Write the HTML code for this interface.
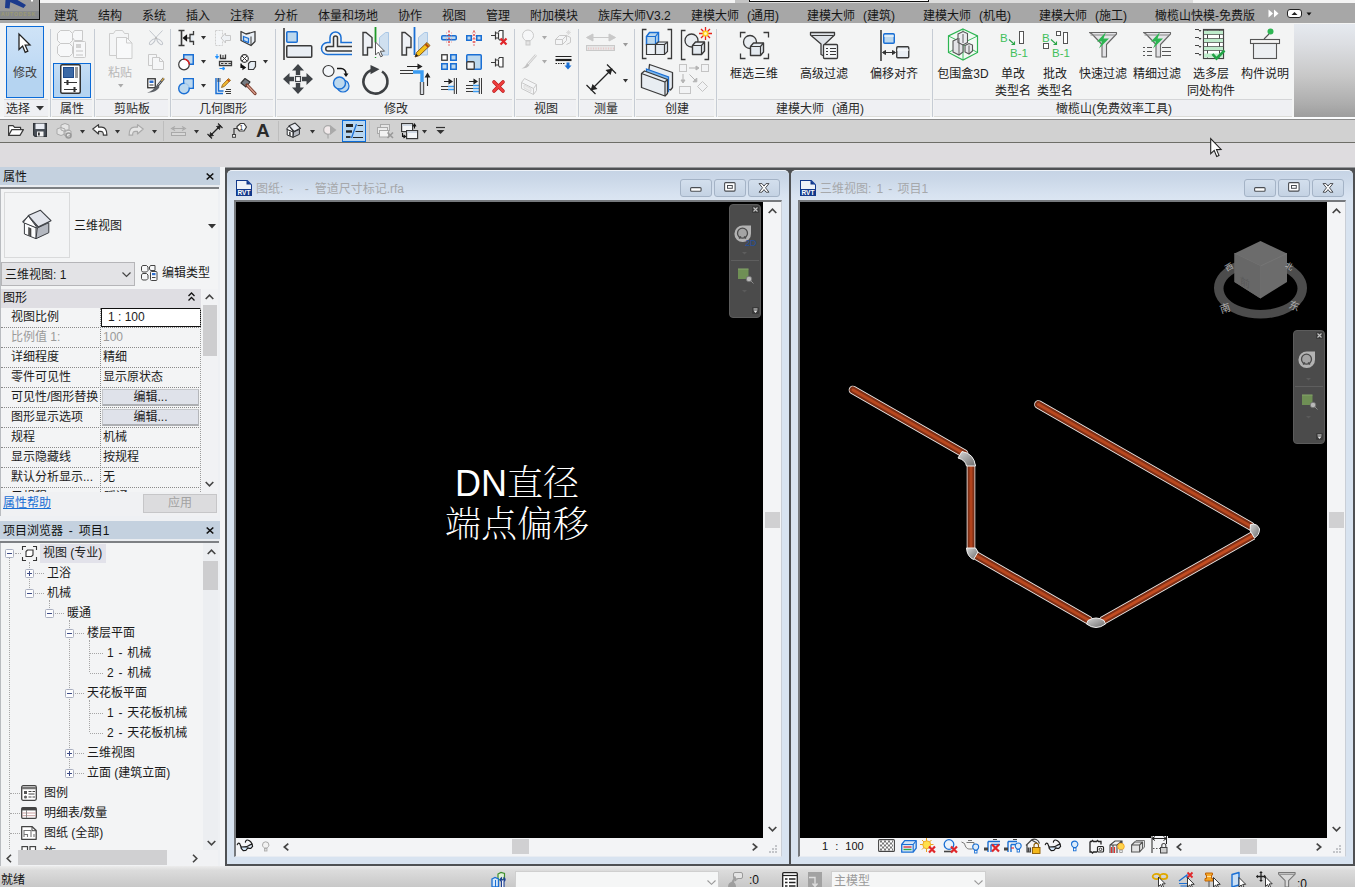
<!DOCTYPE html>
<html lang="zh-CN"><head><meta charset="utf-8"><title>Revit</title>
<style>
*{box-sizing:border-box;margin:0;padding:0}
html,body{width:1355px;height:887px;overflow:hidden;background:#dfe3ea}
body{font-family:"Liberation Sans","Noto Sans CJK SC",sans-serif;font-size:12px;color:#1a1a1a;position:relative}
.a{position:absolute}
.t{position:absolute;white-space:nowrap;line-height:16px;height:16px}
svg{position:absolute;overflow:visible}
</style></head><body>

<!-- top tab bar -->
<div class="a" style="left:0;top:0;width:1355px;height:3px;background:#f4f4f4"></div>
<div class="a" style="left:736px;top:0;width:457px;height:3px;background:#dcdcdc"></div>
<div class="a" style="left:735px;top:0;width:14px;height:3px;background:#c4c4c4"></div>
<div class="a" style="left:749px;top:-3px;width:180px;height:5px;background:#fff;border:1px solid #111"></div>
<div class="a" id="tabbar" style="left:0;top:3px;width:1355px;height:20px;background:#a7a7a7"></div>
<div class="a" style="left:0;top:0;width:40px;height:20px;background:linear-gradient(#9c9c9c 0,#9a9a9a 55%,#878a8c 60%,#85878a 100%);border-right:1px solid #0c0c0c;border-bottom:1px solid #0c0c0c"></div>
<svg style="left:0;top:0" width="40" height="20" viewBox="0 0 40 20"><path d="M5.500 0h5l-1 8.500-4.500-.5zM10 0h7.500l8.500 5-2.500 3-13.500-6z" fill="#1b3a8c"/><path d="M31 0l2 0 0 1.5-2 0z" fill="#fff"/></svg>
<span class="a" style="left:1px;top:11px;font:bold 5px/6px 'Liberation Sans',sans-serif;letter-spacing:.9px;color:#9c9a72;white-space:nowrap">AUTODESK</span>
<style>.tb{position:absolute;top:8px;height:16px;line-height:16px;white-space:nowrap;color:#161616}</style>
<span class="tb" style="left:54px">建筑</span>
<span class="tb" style="left:98px">结构</span>
<span class="tb" style="left:142px">系统</span>
<span class="tb" style="left:186px">插入</span>
<span class="tb" style="left:230px">注释</span>
<span class="tb" style="left:274px">分析</span>
<span class="tb" style="left:318px">体量和场地</span>
<span class="tb" style="left:398px">协作</span>
<span class="tb" style="left:442px">视图</span>
<span class="tb" style="left:486px">管理</span>
<span class="tb" style="left:530px">附加模块</span>
<span class="tb" style="left:598px">族库大师V3.2</span>
<span class="tb" style="left:691px">建模大师<span style="margin-left:8px">(通用)</span></span>
<span class="tb" style="left:807px">建模大师<span style="margin-left:8px">(建筑)</span></span>
<span class="tb" style="left:923px">建模大师<span style="margin-left:8px">(机电)</span></span>
<span class="tb" style="left:1039px">建模大师<span style="margin-left:8px">(施工)</span></span>
<span class="tb" style="left:1155px">橄榄山快模-免费版</span>
<svg style="left:1268px;top:9px" width="46" height="10" viewBox="0 0 46 10"><path d="M0.5 0.5L5 4.5 0.5 8.5zM6 0.5L10.5 4.5 6 8.5z" fill="#fff"/><rect x="19.5" y="0.5" width="14" height="8" rx="2.5" fill="#fff" stroke="#222" stroke-width="1"/><path d="M23.5 6L26.5 3 29.5 6z" fill="#222"/><path d="M38.5 3.5l5 0-2.5 3z" fill="#111"/></svg>

<!-- ribbon -->
<style>.pt{position:absolute;top:101px;height:16px;line-height:16px;white-space:nowrap;color:#2a2a2a}.sep{position:absolute;top:29px;width:1px;height:88px;background:#c6ccd4}.bl{position:absolute;white-space:nowrap;line-height:16px;height:16px;color:#222;text-align:center}.ptb{position:absolute;top:99px;height:18px;background:#eff0f3;border-top:1px solid #d4d5d7;border-bottom:1px solid #dcdcd8}</style>
<div class="a" style="left:0;top:23px;width:1355px;height:96px;background:#f3f4f4"></div>
<div class="a" style="left:1294px;top:24px;width:61px;height:94px;background:linear-gradient(#e6eaf0 0,#dcdee2 22%,#c8c8c8 55%,#adadad 85%,#9c9c9c 100%)"></div>
<div class="a" style="left:0;top:117px;width:1355px;height:2px;background:#fbfcfd"></div>
<div class="ptb" style="left:4px;width:44px"></div>
<div class="ptb" style="left:52px;width:40px"></div>
<div class="ptb" style="left:96px;width:72px"></div>
<div class="ptb" style="left:172px;width:101px"></div>
<div class="ptb" style="left:277px;width:235px"></div>
<div class="ptb" style="left:516px;width:60px"></div>
<div class="ptb" style="left:580px;width:52px"></div>
<div class="ptb" style="left:636px;width:78px"></div>
<div class="ptb" style="left:718px;width:212px"></div>
<div class="ptb" style="left:934px;width:358px"></div>
<div class="sep" style="left:50px"></div>
<div class="sep" style="left:94px"></div>
<div class="sep" style="left:170px"></div>
<div class="sep" style="left:275px"></div>
<div class="sep" style="left:514px"></div>
<div class="sep" style="left:578px"></div>
<div class="sep" style="left:634px"></div>
<div class="sep" style="left:716px"></div>
<div class="sep" style="left:932px"></div>
<span class="pt" style="left:6px">选择</span>
<span class="pt" style="left:60px">属性</span>
<span class="pt" style="left:114px">剪贴板</span>
<span class="pt" style="left:199px">几何图形</span>
<span class="pt" style="left:384px">修改</span>
<span class="pt" style="left:534px">视图</span>
<span class="pt" style="left:594px">测量</span>
<span class="pt" style="left:665px">创建</span>
<span class="pt" style="left:1056px">橄榄山(免费效率工具)</span>
<span class="pt" style="left:776px">建模大师<span style="margin-left:8px">(通用)</span></span>
<svg style="left:36px;top:106px" width="8" height="5" viewBox="0 0 8 5"><path d="M0 0h8l-4 4.5z" fill="#333"/></svg>
<div class="a" style="left:6px;top:26px;width:38px;height:72px;background:linear-gradient(#cfe3f7,#c3dcf5 45%,#b5d4f1 75%);border:1px solid #0b6bd8"></div>
<svg style="left:18px;top:33px" width="14" height="21" viewBox="0 0 14 21"><path d="M1 1v15.5l3.6-3.4 2.6 6.2 2.6-1.1-2.6-6 4.8-.2z" fill="#fff" stroke="#222" stroke-width="1.3" stroke-linejoin="miter"/></svg>
<span class="bl" style="left:13px;top:65px;color:#404040">修改</span>
<div class="a" style="left:53px;top:63px;width:38px;height:35px;background:linear-gradient(#c6def5,#b5d4f1 70%);border:1px solid #0b6bd8"></div>
<svg style="left:60px;top:64px" width="22" height="31" viewBox="0 0 22 31"><rect x="0.75" y="0.75" width="19.5" height="28.5" rx="1.5" fill="#fff" stroke="#333" stroke-width="1.5"/><rect x="3.5" y="3.5" width="10" height="10" fill="#3c69a5" stroke="#1f4a8a"/><rect x="15" y="3" width="3" height="11" fill="#9a9a9a"/><path d="M4 18.5h13M4 25.500h13" stroke="#333" stroke-width="1.2"/><path d="M7.500 16v5M14.500 23v5" stroke="#333" stroke-width="2"/></svg>
<svg style="left:57px;top:29px" width="30" height="30" viewBox="0 0 30 30"><g fill="#f7f8f9" stroke="#c9c9c9" stroke-width="1"><path d="M3.500 1.500h9l3 3v7l-3 3h-9l-3-3v-7z"/><path d="M3.500 14.500h9l3 3v7l-3 3h-9l-3-3v-7z"/><path d="M17.500 1.500h8v10h-8l-2-3v-4z"/><rect x="16.500" y="12.500" width="12" height="16" rx="1"/></g><rect x="19" y="15" width="5" height="4" fill="#d2d2d2"/><path d="M19 22h7M19 26h7" stroke="#c4c4c4"/></svg>
<svg style="left:108px;top:29px" width="26" height="31" viewBox="0 0 26 31"><g fill="#f4f5f6" stroke="#cdcdcd" stroke-width="1"><path d="M1.500 4.500h4l2-3h7l2 3h4v22h-19z"/><path d="M8.500 8.500h10l5.500 5.500v15.500h-15.500z" fill="#f8f9fa"/><path d="M18.500 8.500v5.500h5.500" fill="none"/></g></svg>
<span class="bl" style="left:108px;top:65px;color:#b9b9b9">粘贴</span>
<svg style="left:118px;top:84px" width="6" height="4" viewBox="0 0 6 4"><path d="M0 0h5.500l-2.750 3.500z" fill="#aaa"/></svg>
<svg style="left:148px;top:30px" width="16" height="16" viewBox="0 0 16 16"><g fill="#f4f5f6" stroke="#c2c6cc" stroke-width="1"><path d="M1.500 0.500l7.500 8M14.500 0.500l-7.500 8"/><ellipse cx="11.800" cy="11.800" rx="3.600" ry="1.500" transform="rotate(45 11.800 11.800)"/><ellipse cx="4.200" cy="11.800" rx="3.600" ry="1.500" transform="rotate(-45 4.200 11.800)"/></g><circle cx="8" cy="8.300" r="1.200" fill="#b9b9b9"/></svg>
<svg style="left:148px;top:54px" width="17" height="16" viewBox="0 0 17 16"><g fill="#f5f6f7" stroke="#c9c9c9"><path d="M0.500 0.500h8v11h-8z"/><path d="M4.500 3.500h7l4 4v8h-11z"/><path d="M11.500 3.500v4h4" fill="none"/></g></svg>
<svg style="left:147px;top:77px" width="18" height="18" viewBox="0 0 18 18"><rect x="0.75" y="1.750" width="7.500" height="9" fill="#fff" stroke="#333" stroke-width="1.3"/><rect x="2.500" y="3.500" width="4" height="2.500" fill="#2d6fd0"/><path d="M2.500 8h4" stroke="#333"/><path d="M16.800 1.200l-6.300 7.800" stroke="#3f4246" stroke-width="2.400"/><path d="M16.800 1.200l-2.400 3" stroke="#e0b050" stroke-width="1.200"/><path d="M14 4.600l-3 3.700" stroke="#d8dce2" stroke-width=".8"/><path d="M10.200 7.800l2.300 2c-1.200 3.200-5.500 6-12.500 6 4.500-1.500 7.500-4 10.200-8z" fill="#5c6066"/></svg>
<svg style="left:178px;top:30px" width="16" height="16" viewBox="0 0 16 16"><path d="M0.500 0.500h6M0.500 15.500h6M3.500 0.500v15" stroke="#3a3a3a" stroke-width="1.600" fill="none"/><path d="M15.500 1v3.500h-3.500v7h3.500v3.500" stroke="#3a3a3a" stroke-width="1.300" fill="#e8eff5"/><path d="M12 8h-6M8.500 5.500l-3 2.500 3 2.500z" stroke="#111" stroke-width="1.200" fill="#111"/></svg>
<svg style="left:201px;top:36px" width="5" height="4" viewBox="0 0 5 4"><path d="M0 0h5l-2.500 3.500z" fill="#333"/></svg>
<svg style="left:215px;top:30px" width="16" height="16" viewBox="0 0 16 16"><path d="M0.500 0.500h7v5h2l0 0v0M0.500 0.500v15h7v-5" fill="#f4f6f8" stroke="#cfcfcf" stroke-dasharray="2 1"/><path d="M15.500 5.500h-5v-2.500l-4.500 5 4.500 5v-2.500h5z" fill="#eef1f4" stroke="#c8c8c8"/></svg>
<svg style="left:240px;top:30px" width="16" height="16" viewBox="0 0 16 16"><path d="M1 1.500l5 2.500 4-1 5-1.500v10l-4 4-10-5z" fill="#e9eff5" stroke="#3a3a3a" stroke-width="1.300" stroke-linejoin="round"/><path d="M11 6.500v8.500" stroke="#3a3a3a"/><path d="M3.500 6.500l5 2v4l-5-2z" fill="#cfe2f3" stroke="#1a6fd4" stroke-width="1.300"/></svg>
<svg style="left:178px;top:54px" width="16" height="17" viewBox="0 0 16 17"><rect x="5.750" y="0.750" width="9.500" height="9.500" fill="#bcd8ee" stroke="#1a6fd4" stroke-width="1.500"/><circle cx="6" cy="10.500" r="5.300" fill="#fff" stroke="#3a3a3a" stroke-width="1.200"/><path d="M6 5.200a5.300 5.300 0 0 1 5.300 5.300" fill="none" stroke="#e02020" stroke-width="1.500"/></svg>
<svg style="left:201px;top:60px" width="5" height="4" viewBox="0 0 5 4"><path d="M0 0h5l-2.500 3.500z" fill="#333"/></svg>
<svg style="left:215px;top:54px" width="17" height="17" viewBox="0 0 17 17"><path d="M2 0v4M0.500 2.500l1.500 2 1.500-2z" stroke="#1e90ff" fill="#1e90ff"/><path d="M5.500 0.500v4h5v-4" fill="none" stroke="#3a3a3a" stroke-width="1.300"/><path d="M8 1v3" stroke="#3a3a3a"/><path d="M4.500 7.500h12v4h-12z" fill="#fff" stroke="#3a3a3a" stroke-width="1.300"/><path d="M6 9.500h10" stroke="#3a3a3a" stroke-dasharray="2.500 1.200"/><path d="M4.500 14.500h5M8 13l2 1.500-2 1.500z" stroke="#1e90ff" fill="#1e90ff"/></svg>
<svg style="left:240px;top:54px" width="16" height="17" viewBox="0 0 16 17"><circle cx="4.500" cy="4.500" r="3.800" fill="#fff" stroke="#3a3a3a" stroke-width="1.200"/><path d="M2 2l5 5M7 2l-5 5" stroke="#3a3a3a"/><path d="M8.500 9.500l2-2h5v5l-2 3h-5z" fill="#e6edf3" stroke="#3a3a3a" stroke-width="1.200"/><path d="M1 9.500v4h3.500M3 12l2.200 1.500-2.200 1.500z" stroke="#111" stroke-width="1.200" fill="#111"/></svg>
<svg style="left:263px;top:60px" width="5" height="4" viewBox="0 0 5 4"><path d="M0 0h5l-2.500 3.500z" fill="#333"/></svg>
<svg style="left:178px;top:78px" width="16" height="17" viewBox="0 0 16 17"><rect x="5.750" y="0.750" width="9.500" height="9.500" fill="#bcd8ee" stroke="#1a6fd4" stroke-width="1.500"/><circle cx="6" cy="10.500" r="5.300" fill="#bcd8ee" stroke="#1a6fd4" stroke-width="1.400"/><rect x="6.500" y="1.500" width="8" height="8" fill="#bcd8ee" opacity=".85"/></svg>
<svg style="left:201px;top:84px" width="5" height="4" viewBox="0 0 5 4"><path d="M0 0h5l-2.500 3.500z" fill="#333"/></svg>
<svg style="left:215px;top:78px" width="17" height="17" viewBox="0 0 17 17"><path d="M1 0v15.500h7M3.500 0v13h5" fill="none" stroke="#1a6fd4" stroke-width="1.500"/><path d="M3 0v4M5 0v4" stroke="#3a3a3a" stroke-width=".8"/><path d="M11 11.500h5M11 15.500h5M10 13.500h6" stroke="#3a3a3a" stroke-width="1"/><path d="M6.500 9.500l1-2.800 6-6.200 2 1.800-6.200 6.200z" fill="#f2b830" stroke="#8a5a12" stroke-width=".8"/><path d="M12.500 1.500l2 2" stroke="#c24a10" stroke-width="1.600"/></svg>
<svg style="left:240px;top:78px" width="17" height="17" viewBox="0 0 17 17"><path d="M1 5l4-4.500 5 3.500-4 5z" fill="#757b82" stroke="#333" stroke-width="1.200" stroke-linejoin="round"/><path d="M7 7l8 8.500" stroke="#7a3b2a" stroke-width="3.200" stroke-linecap="round"/><path d="M7.500 7.500l7.500 8" stroke="#d9a090" stroke-width="1.200" stroke-linecap="round"/></svg>
<svg style="left:283px;top:28px" width="30" height="32" viewBox="0 0 30 32"><path d="M1 0v32" stroke="#222" stroke-width="1.400"/><rect x="3.750" y="3.750" width="10.500" height="10.500" rx="1" fill="#bcd8ee" stroke="#1a6fd4" stroke-width="1.500"/><rect x="3.750" y="17.750" width="25" height="11.500" rx="1" fill="#e9eef4" stroke="#3a3a3a" stroke-width="1.500"/></svg>
<svg style="left:322px;top:31px" width="30" height="26" viewBox="0 0 30 26"><path d="M30 11.500h-11v-5a5.500 5.500 0 0 0-11 0v5h-2.500a5 5 0 0 0 0 12h24.500" fill="none" stroke="#1a6fd4" stroke-width="1.500"/><path d="M30 15.500h-14.500v-8.500a2 2 0 0 0-4 0v8.500h-5.500a2.200 2.200 0 0 0 0 4.500h24" fill="none" stroke="#3a3a3a" stroke-width="1.500"/></svg>
<svg style="left:362px;top:27px" width="28" height="32" viewBox="0 0 28 32"><path d="M1 5.500h3l6 5v10h-4.500v7.500h-4.500z" fill="#eef1f5" stroke="#3a3a3a" stroke-width="1.400"/><path d="M26.500 5.500h-3l-6 5v17.500h9z" fill="#cfe0f0" stroke="#a9c7e6" stroke-width="1"/><path d="M13.500 0v15" stroke="#1f9a28" stroke-width="1.800"/><path d="M13.500 15v16" stroke="#1f9a28" stroke-width="1.400" stroke-dasharray="1 14"/><path d="M13.500 15v13l3-3 2.200 4.800 1.800-.8-2.200-4.800h4.200z" fill="#fff" stroke="#555" stroke-width="1"/></svg>
<svg style="left:401px;top:27px" width="30" height="32" viewBox="0 0 30 32"><path d="M1 5.500h3l6 5v10h-4.500v7.500h-4.500z" fill="#eef1f5" stroke="#3a3a3a" stroke-width="1.400"/><path d="M26.500 5.500h-3l-6 5v17.500h9z" fill="#cfe0f0" stroke="#a9c7e6" stroke-width="1"/><path d="M13.500 0v28" stroke="#1a6fd4" stroke-width="1.800"/><path d="M14 30l1.500-4.500 10.500-10 3 3-10.500 10z" fill="#f5c21a" stroke="#7a4b10" stroke-width=".9"/><path d="M24.500 17l3 3" stroke="#b04a10" stroke-width="2.200"/><path d="M14 30l1.200-3.200 2 2z" fill="#222"/></svg>
<svg style="left:283px;top:64px" width="30" height="30" viewBox="0 0 30 30"><path d="M15 0l6 6.500h-3.800v4.500h-4.400v-4.500h-3.800zM15 30l6-6.500h-3.800v-4.500h-4.400v4.500h-3.800zM0 15l6.500-6v3.800h4.500v4.400h-4.500v3.800zM30 15l-6.500-6v3.800h-4.500v4.400h4.500v3.800z" fill="#3f4347"/><rect x="12.500" y="12.500" width="5" height="5" fill="#fff" stroke="#3f4347" stroke-width="1.200"/></svg>
<svg style="left:322px;top:64px" width="29" height="30" viewBox="0 0 29 30"><circle cx="6.500" cy="7" r="5.500" fill="#f4f7fa" stroke="#3a3a3a" stroke-width="1.200"/><path d="M15 4.500h4a5 5 0 0 1 5 5v1" fill="none" stroke="#111" stroke-width="1.400"/><path d="M21.500 9.500l2.500 3.500 2.500-3.500z" fill="#111"/><circle cx="21" cy="22" r="6" fill="#bcd8ee" stroke="#1a6fd4" stroke-width="1.200"/><circle cx="17.500" cy="19" r="6" fill="#bcd8ee" stroke="#1a6fd4" stroke-width="1.400"/></svg>
<svg style="left:362px;top:64px" width="28" height="30" viewBox="0 0 28 30"><path d="M20 7.500a12 12 0 1 1-9-1.700" fill="none" stroke="#3d4043" stroke-width="2.600"/><path d="M8.500 1l9 4.200-9 5z" fill="#3d4043"/></svg>
<svg style="left:400px;top:64px" width="31" height="31" viewBox="0 0 31 31"><path d="M7 2.500h13M18 0.500l3.500 2-3.500 2z" stroke="#222" fill="#222" stroke-width="1.100"/><path d="M0 6.500h13M0 9.500h13" stroke="#3a3a3a" stroke-width="1.100"/><path d="M13 8h9v10" fill="none" stroke="#3b9cf2" stroke-width="3.400"/><path d="M22 18v12" stroke="#d9dde2" stroke-width="3.400"/><path d="M20.300 18v12.500h3.400v-12.500" fill="none" stroke="#3a3a3a" stroke-width="1"/><path d="M27.500 22v-11M25.500 13l2-3.500 2 3.500z" stroke="#222" fill="#222" stroke-width="1.100"/></svg>
<svg style="left:441px;top:30px" width="16" height="16" viewBox="0 0 16 16"><rect x="0.750" y="5.750" width="14.500" height="4" rx="1" fill="#bcd8ee" stroke="#1a6fd4" stroke-width="1.500"/><path d="M8 0.500v15" stroke="#e03030" stroke-width="1.300" stroke-dasharray="2 1.500"/><path d="M5.500 2.500v11M10.500 2.500v11" stroke="#f08080" stroke-width=".8" stroke-dasharray="1 2"/></svg>
<svg style="left:466px;top:30px" width="16" height="16" viewBox="0 0 16 16"><rect x="0.750" y="5.750" width="4.500" height="4.500" fill="#bcd8ee" stroke="#1a6fd4" stroke-width="1.500"/><rect x="10.750" y="5.750" width="4.500" height="4.500" fill="#bcd8ee" stroke="#1a6fd4" stroke-width="1.500"/><path d="M8 0.500v15" stroke="#e03030" stroke-width="1.300" stroke-dasharray="2 1.500"/><path d="M6.500 2.500v11M9.500 2.500v11" stroke="#f08080" stroke-width=".8" stroke-dasharray="1 2"/></svg>
<svg style="left:491px;top:30px" width="17" height="16" viewBox="0 0 17 16"><path d="M0 5.500h4M4.500 1.500v8M4.500 3h3v5h-3M7.500 2l1-1.500h3.500v9.500h-3.500l-1-1.500" fill="#fff" stroke="#3a3a3a" stroke-width="1.200"/><path d="M9.500 8.500l6 6M15.500 8.500l-6 6" stroke="#e0262a" stroke-width="2.200"/></svg>
<svg style="left:441px;top:54px" width="16" height="16" viewBox="0 0 16 16"><rect x="0.750" y="0.750" width="5.500" height="5.500" fill="#fff" stroke="#3a3a3a" stroke-width="1.300"/><rect x="9.750" y="0.750" width="5.500" height="5.500" fill="#bcd8ee" stroke="#1a6fd4" stroke-width="1.500"/><rect x="0.750" y="9.750" width="5.500" height="5.500" fill="#bcd8ee" stroke="#1a6fd4" stroke-width="1.500"/><rect x="9.750" y="9.750" width="5.500" height="5.500" fill="#bcd8ee" stroke="#1a6fd4" stroke-width="1.500"/></svg>
<svg style="left:466px;top:54px" width="16" height="16" viewBox="0 0 16 16"><rect x="0.750" y="0.750" width="14.500" height="14.500" rx="1" fill="#bcd8ee" stroke="#1a6fd4" stroke-width="1.500"/><rect x="0.750" y="7.750" width="7.500" height="7.500" rx="1" fill="#f2f4f6" stroke="#3a3a3a" stroke-width="1.300"/></svg>
<svg style="left:491px;top:54px" width="17" height="16" viewBox="0 0 17 16"><path d="M0 8.500h4M4.500 4.500v8M4.500 6h3v5h-3M7.500 5l1-1.500h3.500v9.500h-3.500l-1-1.500" fill="#fff" stroke="#3a3a3a" stroke-width="1.200"/></svg>
<svg style="left:441px;top:78px" width="16" height="17" viewBox="0 0 16 17"><path d="M3 3.500h7M8 1.500l3 2-3 2z" stroke="#222" fill="#222" stroke-width="1.100"/><path d="M0 8.500h7M0 11.500h7" stroke="#3a3a3a" stroke-width="1"/><path d="M7 8.500h6M7 11.500h6" stroke="#3b9cf2" stroke-width="1.400"/><path d="M13.300 0v16M15.500 0v16" stroke="#3a3a3a" stroke-width="1"/></svg>
<svg style="left:466px;top:78px" width="16" height="17" viewBox="0 0 16 17"><path d="M3 3.500h7M8 1.500l3 2-3 2z" stroke="#222" fill="#222" stroke-width="1.100"/><path d="M0 7.500h7M0 10.500h7M0 13.500h7" stroke="#3a3a3a" stroke-width="1"/><path d="M7 7.500h6M7 10.500h6M7 13.500h6" stroke="#3b9cf2" stroke-width="1.400"/><path d="M13.300 0v16M15.500 0v16" stroke="#3a3a3a" stroke-width="1"/></svg>
<svg style="left:492px;top:80px" width="13" height="13" viewBox="0 0 13 13"><path d="M2 2l9 9M11 2l-9 9" stroke="#b81c1c" stroke-width="3.600" stroke-linecap="round"/><path d="M2 2l9 9M11 2l-9 9" stroke="#ef3e3e" stroke-width="2.400" stroke-linecap="round"/></svg>
<svg style="left:522px;top:30px" width="14" height="16" viewBox="0 0 14 16"><path d="M3.500 10.500c-2-1.500-3-3-3-5a5.500 5.500 0 0 1 11 0c0 2-1 3.500-3 5z" fill="#f6f7f8" stroke="#c9c9c9"/><rect x="4" y="11" width="4" height="4" fill="#e4e4e4" stroke="#c9c9c9"/></svg>
<svg style="left:542px;top:36px" width="5" height="4" viewBox="0 0 5 4"><path d="M0 0h5l-2.500 3.500z" fill="#aaa"/></svg>
<svg style="left:555px;top:30px" width="17" height="16" viewBox="0 0 17 16"><path d="M0.500 9.500l4-4h7l-4 4zM0.500 9.500v5h7v-5M7.500 14.500l4-4v-5" fill="#f4f5f6" stroke="#c9c9c9"/><path d="M11.500 5.500l4 2v5l-4 2" fill="none" stroke="#c9c9c9"/><path d="M13.500 0v5M11 2.500h5M11.800 .8l3.500 3.500M15.300 .8l-3.500 3.500" stroke="#d8d8d8" stroke-width=".8"/></svg>
<svg style="left:521px;top:54px" width="16" height="16" viewBox="0 0 16 16"><path d="M15 1l-8 9" stroke="#c9c9c9" stroke-width="2.600"/><path d="M15 1l-8 9" stroke="#f0f0f0" stroke-width="1"/><path d="M6 9l2.500 2c-1.500 2.500-4 3.500-8 3.500 3-1.200 4.500-3 5.500-5.500z" fill="#c0c0c0"/></svg>
<svg style="left:542px;top:60px" width="5" height="4" viewBox="0 0 5 4"><path d="M0 0h5l-2.500 3.500z" fill="#aaa"/></svg>
<svg style="left:555px;top:55px" width="17" height="15" viewBox="0 0 17 15"><path d="M0.500 1.500h16" stroke="#222" stroke-width="1"/><path d="M0.500 5h16" stroke="#222" stroke-width="2.200"/><path d="M0.500 8.500h10" stroke="#222" stroke-width="1" stroke-dasharray="1.500 1"/><path d="M11.500 7.500h3v3h2l-3.500 4-3.500-4h2z" fill="#1a6fd4"/></svg>
<svg style="left:521px;top:78px" width="17" height="17" viewBox="0 0 17 17"><path d="M0.500 4.500l3-4 12 6v6l-3 4-12-6z" fill="#f4f5f6" stroke="#c9c9c9"/><path d="M0.500 4.500l12 6 3-4M12.500 10.500v6" fill="none" stroke="#c9c9c9"/><path d="M3 7l7 3.500v3l-7-3.500z" fill="#ececec" stroke="#ddd"/></svg>
<svg style="left:586px;top:34px" width="30" height="18" viewBox="0 0 30 18"><path d="M3 3.500h24M7 0l-6.500 3.500 6.500 3.500zM23 0l6.500 3.500-6.500 3.500z" stroke="#c9c9c9" fill="#c9c9c9" stroke-width="1"/><rect x="0.500" y="11.500" width="28" height="5" fill="#e6e6e6" stroke="#c9c9c9"/><path d="M2 14.500h26" stroke="#e8c8c8" stroke-width="2" stroke-dasharray="1 1.500"/></svg>
<svg style="left:623px;top:43px" width="5" height="4" viewBox="0 0 5 4"><path d="M0 0h5l-2.500 3.500z" fill="#999"/></svg>
<svg style="left:586px;top:64px" width="30" height="30" viewBox="0 0 30 30"><path d="M21 0.500l9 9M0.500 21l9 9" stroke="#222" stroke-width="1.200"/><path d="M6 25l19-19" stroke="#222" stroke-width="1.300"/><path d="M26.500 4.500l-2 6.500-5-5zM4.500 26.500l2-6.500 5 5z" fill="#222"/></svg>
<svg style="left:623px;top:79px" width="5" height="4" viewBox="0 0 5 4"><path d="M0 0h5l-2.500 3.500z" fill="#333"/></svg>
<svg style="left:641px;top:29px" width="32" height="31" viewBox="0 0 32 31"><path d="M5.500 0.500h-4v29h4M26.500 0.500h4v29h-4" fill="none" stroke="#3a3a3a" stroke-width="1.300"/><path d="M5.500 7.500l3-4h9v9l-3 3h-9z" fill="#bcd8ee" stroke="#1a6fd4" stroke-width="1.500"/><path d="M5.500 7.500h9v8M14.500 7.500l3-4" fill="none" stroke="#1a6fd4" stroke-width="1.200"/><path d="M5.500 15.500h9v10h-9z" fill="#eef2f6" stroke="#3a3a3a" stroke-width="1.200"/><path d="M14.500 15.500l3-2.500h9v9.500l-3 3h-9z" fill="#e4eaf0" stroke="#3a3a3a" stroke-width="1.200"/><path d="M14.500 15.500h9v10M23.500 15.500l3-2.500" fill="none" stroke="#3a3a3a" stroke-width="1.200"/></svg>
<svg style="left:680px;top:27px" width="32" height="33" viewBox="0 0 32 33"><path d="M5.500 3.500h-4v29h4M24.500 32.500h4v-18" fill="none" stroke="#3a3a3a" stroke-width="1.300"/><circle cx="11.500" cy="13.500" r="6.500" fill="#e9edf1" stroke="#3a3a3a" stroke-width="1.300"/><path d="M12.500 18.500l3-3.500h9v9l-3 3.500h-9z" fill="#e4eaf0" stroke="#3a3a3a" stroke-width="1.400" stroke-linejoin="round"/><path d="M12.500 18.500h9v9M21.500 18.500l3-3.500" fill="none" stroke="#3a3a3a" stroke-width="1.200"/><path d="M25.500 0v13M19 6.500h13M21 2l9 9M30 2l-9 9" stroke="#e8261c" stroke-width="1.300"/><circle cx="25.500" cy="6.500" r="3" fill="#ffd21e"/><circle cx="25.500" cy="6.500" r="1.500" fill="#fff6c0"/></svg>
<svg style="left:641px;top:64px" width="33" height="33" viewBox="0 0 33 33"><path d="M8.500 0.500l23 8v15l-2 2.500-23-8z" fill="#e8edf2" stroke="#3a3a3a" stroke-width="1.300" stroke-linejoin="round"/><path d="M5.500 5l22 8v14.500l-22-8z" fill="#7db8ee" stroke="#1a6fd4" stroke-width="1.300"/><path d="M0.500 9.500l3-2.500 23 8.500v14l-2.500 2.500-23.500-8.500z" fill="#e8edf2" stroke="#3a3a3a" stroke-width="1.300" stroke-linejoin="round"/><path d="M0.500 9.500l23.500 8.500 2.500-2.500M24 18v14" fill="none" stroke="#3a3a3a" stroke-width="1.200"/></svg>
<svg style="left:679px;top:64px" width="30" height="30" viewBox="0 0 30 30"><g fill="#f2f3f4" stroke="#c4c4c4"><rect x="0.500" y="0.500" width="7" height="7"/><rect x="22.500" y="0.500" width="7" height="7"/><rect x="0.500" y="22.500" width="11" height="7"/><path d="M23.500 17.500l5 5-5 5-5-5z"/></g><g stroke="#b4b4b4" fill="#b4b4b4"><path d="M10 4h9M17 2l3 2-3 2zM4 10v8M2 16l2 3 2-3zM10.500 10.500l6 6M17.800 14l0 3.800-3.800 0z"/></g></svg>
<svg style="left:740px;top:32px" width="29" height="27" viewBox="0 0 29 27"><path d="M0.500 5.500v-5h5M23.500 0.500h5v5M28.500 21.500v5h-5M5.500 26.500h-5v-5" fill="none" stroke="#3a3a3a" stroke-width="1.300"/><circle cx="10" cy="10" r="6.500" fill="#e9edf1" stroke="#3a3a3a" stroke-width="1.300"/><path d="M10.500 14.500l3-3.500h10v9l-3 3.500h-10z" fill="#e4eaf0" stroke="#3a3a3a" stroke-width="1.400" stroke-linejoin="round"/><path d="M10.500 14.500h10v9M20.500 14.500l3-3.500" fill="none" stroke="#3a3a3a" stroke-width="1.200"/></svg>
<span class="bl" style="left:694px;width:120px;top:66px;color:#222">框选三维</span>
<svg style="left:810px;top:32px" width="29" height="27" viewBox="0 0 29 27"><path d="M0.500 0.500h24v2.500l-9.500 9v12.500l-4 -2v-10.500l-10.500-9z" fill="#dfe3e8" stroke="#3a3a3a" stroke-width="1.300" stroke-linejoin="round"/><path d="M1.500 3.500h22" stroke="#3a3a3a"/><rect x="13.500" y="12.500" width="14" height="14" rx="1" fill="#f4f6f8" stroke="#3a3a3a" stroke-width="1.300"/><path d="M16 16.500h2M20 16.500h6M16 19.500h2M20 19.500h6M16 22.500h2M20 22.500h6" stroke="#3a3a3a" stroke-width="1.100"/></svg>
<span class="bl" style="left:764px;width:120px;top:66px;color:#222">高级过滤</span>
<svg style="left:880px;top:30px" width="30" height="31" viewBox="0 0 30 31"><path d="M1 0v31" stroke="#222" stroke-width="1.400"/><rect x="3.750" y="3.750" width="10.500" height="9.500" rx="1" fill="#bcd8ee" stroke="#1a6fd4" stroke-width="1.500"/><path d="M4 6h10" stroke="#fff" stroke-width="1"/><rect x="16.750" y="16.750" width="12" height="11" rx="1" fill="#e9eef4" stroke="#3a3a3a" stroke-width="1.400"/><path d="M17 20h12" stroke="#fff"/><path d="M3 22.500h12M5.500 20.500l-3 2 3 2zM12.500 20.500l3 2-3 2z" stroke="#333" fill="#333" stroke-width="1"/></svg>
<span class="bl" style="left:834px;width:120px;top:66px;color:#222">偏移对齐</span>
<svg style="left:947px;top:28px" width="32" height="33" viewBox="0 0 32 33"><path d="M16 1l14.500 7v16.500l-14.500 7.500-14.500-7.500v-16.500z" fill="#f2faf4" stroke="#2db552" stroke-width="1.200"/><path d="M1.500 8l14.500 7 14.500-7M16 15v17M16 1v14M1.500 24.500l14.500-8 14.500 8" fill="none" stroke="#2db552" stroke-width=".9"/><path d="M6 13l6-3 4 2v12l-4 3-6-3z" fill="#e4e4e8" stroke="#555" stroke-width="1.100"/><path d="M11 6l5-2.500 4.500 2v9l-4.500 2.500-5-2.500z" fill="#ececf0" stroke="#555" stroke-width="1.100"/><path d="M18 17.500l4-2 3.500 1.500v6l-3.500 3-4-2z" fill="#e8e8ec" stroke="#555" stroke-width="1.100"/><path d="M12 10v17M16 6v9M22 17.500v8" stroke="#555" stroke-width=".9"/></svg>
<span class="bl" style="left:903px;width:120px;top:66px;color:#222">包围盒3D</span>
<svg style="left:1000px;top:31px" width="28" height="28" viewBox="0 0 28 28"><text x="0" y="11" font-family="Liberation Sans,sans-serif" font-size="11.500" fill="#3fbf5a">B</text><text x="10" y="26" font-family="Liberation Sans,sans-serif" font-size="11.500" fill="#3fbf5a">B-1</text><path d="M9 8.500l5 4.500M14.500 10.500v3h-3" stroke="#2aa548" stroke-width="1.100" fill="none"/><rect x="19.500" y="0.500" width="4" height="12" fill="#fff" stroke="#555"/></svg>
<span class="bl" style="left:953px;width:120px;top:66px;color:#222">单改</span>
<span class="bl" style="left:953px;width:120px;top:83px;color:#222">类型名</span>
<svg style="left:1042px;top:31px" width="28" height="28" viewBox="0 0 28 28"><text x="0" y="11" font-family="Liberation Sans,sans-serif" font-size="11.500" fill="#3fbf5a">B</text><text x="10" y="26" font-family="Liberation Sans,sans-serif" font-size="11.500" fill="#3fbf5a">B-1</text><path d="M9 8.500l5 4.500M14.500 10.500v3h-3" stroke="#2aa548" stroke-width="1.100" fill="none"/><rect x="14.500" y="0.500" width="4" height="4" fill="#fff" stroke="#555"/><rect x="21.500" y="1.500" width="4" height="11" fill="#fff" stroke="#555"/><rect x="1.500" y="12.500" width="5" height="5" fill="#fff" stroke="#555"/></svg>
<span class="bl" style="left:995px;width:120px;top:66px;color:#222">批改</span>
<span class="bl" style="left:995px;width:120px;top:83px;color:#222">类型名</span>
<svg style="left:1089px;top:32px" width="29" height="26" viewBox="0 0 29 26"><path d="M0.500 0.500h27v1.500l-10 10.500v12.500h-4.500v-12.500l-10-10.500z" fill="#e3e3e6" stroke="#666" stroke-width="1.100" stroke-linejoin="round"/><path d="M1.500 3h25" stroke="#888"/><path d="M17 0l-9 9.500h5l-3 7 10-10h-5.500z" fill="#2db552"/></svg>
<span class="bl" style="left:1043px;width:120px;top:66px;color:#222">快速过滤</span>
<svg style="left:1143px;top:32px" width="29" height="26" viewBox="0 0 29 26"><path d="M0.500 0.500h27v1.500l-10 10.500v12.500h-4.500v-12.500l-10-10.500z" fill="#e3e3e6" stroke="#666" stroke-width="1.100" stroke-linejoin="round"/><path d="M1.500 3h25" stroke="#888"/><path d="M17 0l-9 9.500h5l-3 7 10-10h-5.500z" fill="#2db552"/><path d="M0 15.500h2M4 15.500h5M0 19.500h2M4 19.500h5M0 23.500h2M4 23.500h5" stroke="#555" stroke-width="1.200"/><path d="M19 15.500h9M19 19.500h9M19 23.500h9" stroke="#555" stroke-width="1.100"/></svg>
<span class="bl" style="left:1097px;width:120px;top:66px;color:#222">精细过滤</span>
<svg style="left:1195px;top:29px" width="31" height="32" viewBox="0 0 31 32"><rect x="8.500" y="0.500" width="20" height="29" fill="#fff" stroke="#444" stroke-width="1.200"/><path d="M12.500 0.500v29M24.500 0.500v29" stroke="#444" stroke-width="1"/><path d="M9 3.500h19M9 11.500h19M9 19.500h19M9 26.500h19" stroke="#bfeccc" stroke-width="4"/><path d="M9 1.500h19M9 5.500h19M9 9.500h19M9 13.500h19M9 17.500h19M9 21.500h19" stroke="#444" stroke-width=".7"/><path d="M0 0.500h4M0 8.500h4M0 16.500h4M0 24.500h4" stroke="#444" stroke-width="1"/><path d="M3.500 1l1.500 2 1.500-2zM3.500 9l1.500 2 1.500-2zM3.500 17l1.500 2 1.500-2zM3.500 25l1.500 2 1.500-2z" fill="#444"/><path d="M17.500 25l4 4.500 8-8" fill="none" stroke="#21a346" stroke-width="2.600"/></svg>
<span class="bl" style="left:1151px;width:120px;top:66px;color:#222">选多层</span>
<span class="bl" style="left:1151px;width:120px;top:83px;color:#222">同处构件</span>
<svg style="left:1250px;top:28px" width="31" height="33" viewBox="0 0 31 33"><circle cx="20.500" cy="3.500" r="3" fill="#2db552"/><path d="M19 6l-5 5" stroke="#555" stroke-width="1.100"/><rect x="0.500" y="11.500" width="29" height="4" fill="#f4f4f4" stroke="#555" stroke-width="1.100"/><rect x="3.500" y="15.500" width="23" height="15" fill="#eceff2" stroke="#555" stroke-width="1.100"/></svg>
<span class="bl" style="left:1205px;width:120px;top:66px;color:#222">构件说明</span>

<!-- QAT + options bar -->
<div class="a" style="left:0;top:119px;width:1355px;height:24px;background:#d1d1d1;border-top:1px solid #8c8c8c;border-bottom:1px solid #6e6e68"></div>
<div class="a" style="left:0;top:143px;width:1355px;height:24px;background:#dedcdf"></div>
<svg style="left:8px;top:125px" width="16" height="11" viewBox="0 0 16 11"><path d="M0.600 10.400v-9.800h4.500l1.500 1.800h6v2.500" fill="#fff" stroke="#3a3a3a" stroke-width="1.200" stroke-linejoin="round"/><path d="M0.600 10.400l3.200-5.800h11.600l-3.400 5.800z" fill="#fff" stroke="#3a3a3a" stroke-width="1.200" stroke-linejoin="round"/></svg>
<svg style="left:33px;top:123px" width="14" height="14" viewBox="0 0 14 14"><path d="M0.600 0.600h12.800v12.800h-11.300l-1.500-1.500z" fill="#4a5058" stroke="#30343a" stroke-width="1.200"/><rect x="2.500" y="0.600" width="9" height="5.400" fill="#e9ecf3"/><rect x="4" y="8.500" width="6.500" height="5" fill="#f4f4f4"/><rect x="5" y="9.500" width="1.800" height="3" fill="#333"/></svg>
<svg style="left:56px;top:123px" width="16" height="16" viewBox="0 0 16 16"><path d="M5 2l4-1.500 4 1.500v5l-4 1.500-4-1.500zM1 6l4-1.500 4 1.500v5l-4 1.500-4-1.500zM8 8l3.500-1.200 3.500 1.200v4l-3.500 1.500-3.500-1.500z" fill="#e4e4e4" stroke="#a9a9a9" stroke-width="1"/><circle cx="12.500" cy="12.500" r="2.500" fill="none" stroke="#999" stroke-width="1.600"/></svg>
<svg style="left:80px;top:130px" width="5" height="4" viewBox="0 0 5 4"><path d="M0 0h5l-2.500 3.500z" fill="#333"/></svg>
<svg style="left:92px;top:124px" width="16" height="12" viewBox="0 0 16 12"><path d="M0.800 5l5.700-4.400v2.600h3c3.800 0 5.400 2.600 5.400 8h-3.500c0-3-.6-3.800-2.800-3.800h-2.100v2.600z" fill="#fff" stroke="#3a3a3a" stroke-width="1.200" stroke-linejoin="round"/></svg>
<svg style="left:115px;top:130px" width="5" height="4" viewBox="0 0 5 4"><path d="M0 0h5l-2.500 3.500z" fill="#333"/></svg>
<svg style="left:128px;top:124px" width="16" height="12" viewBox="0 0 16 12"><path d="M15.200 5l-5.700-4.400v2.600h-3c-3.800 0-5.400 2.600-5.400 8h3.500c0-3 .6-3.800 2.800-3.800h2.100v2.600z" fill="#e6e6e6" stroke="#a9a9a9" stroke-width="1.200" stroke-linejoin="round"/></svg>
<svg style="left:152px;top:130px" width="5" height="4" viewBox="0 0 5 4"><path d="M0 0h5l-2.500 3.500z" fill="#333"/></svg>
<div class="a" style="left:163px;top:121px;width:1px;height:20px;background:#bdbdbd"></div>
<svg style="left:171px;top:126px" width="15" height="10" viewBox="0 0 15 10"><path d="M2 2.500h11M4 0.500l-3.500 2 3.500 2M11 0.500l3.500 2-3.500 2" fill="none" stroke="#a9a9a9" stroke-width="1.100"/><rect x="0.500" y="6.500" width="14" height="3" fill="#d8d8d8" stroke="#a9a9a9"/></svg>
<svg style="left:194px;top:130px" width="5" height="4" viewBox="0 0 5 4"><path d="M0 0h5l-2.500 3.500z" fill="#333"/></svg>
<svg style="left:207px;top:123px" width="16" height="16" viewBox="0 0 16 16"><path d="M11 0.500l4.500 4.500M0.500 11l4.500 4.500" stroke="#222" stroke-width="1.100"/><path d="M4 12l8-8" stroke="#222" stroke-width="1.300"/><path d="M13.500 2.500l-1 4-3-3zM2.500 13.500l1-4 3 3z" fill="#222" stroke="#222" stroke-width=".8"/></svg>
<svg style="left:232px;top:123px" width="15" height="15" viewBox="0 0 15 15"><path d="M5 3.500l3.500-3h3.500l2.500 3.500-2.500 4h-4.500l-2.500-3z" fill="#fff" stroke="#3a3a3a" stroke-width="1.200" stroke-linejoin="round"/><text x="7.600" y="7.300" font-size="6.500" font-family="Liberation Sans,sans-serif" fill="#111">1</text><path d="M5.500 5.500h-3.500v6" fill="none" stroke="#3a3a3a" stroke-width="1.200"/><rect x="0.600" y="11.500" width="2.800" height="2.800" fill="#fff" stroke="#3a3a3a"/></svg>
<span class="a" style="left:256px;top:120px;font:bold 19px/22px 'Liberation Sans',sans-serif;color:#2b2b2b">A</span>
<div class="a" style="left:278px;top:121px;width:1px;height:20px;background:#bdbdbd"></div>
<svg style="left:285px;top:122px" width="17" height="17" viewBox="0 0 17 17"><g transform="scale(.5)"><path d="M4.400 14.500v11.500l11.600 4.700v-11z" fill="#fbfcfd" stroke="#2e3034" stroke-width="2"/><path d="M16 30.700l12.800-6v-10l-11.500 5.300z" fill="#b4b8c0" stroke="#2e3034" stroke-width="2"/><path d="M8.300 7.900l-5.200 6.500 12.900 5.300 1.300.3z" fill="#fdfdfe" stroke="#2e3034" stroke-width="2" stroke-linejoin="round"/><path d="M8.300 7.500l12-5.300 10.700 10.500-12.900 6.200z" fill="#e9ecf2" stroke="#2e3034" stroke-width="2.200" stroke-linejoin="round"/><path d="M8.300 19.100l3 1.300v8.100l-3-1.200z" fill="#3a3a3a"/></g></svg>
<svg style="left:310px;top:130px" width="5" height="4" viewBox="0 0 5 4"><path d="M0 0h5l-2.500 3.500z" fill="#333"/></svg>
<svg style="left:323px;top:124px" width="14" height="15" viewBox="0 0 14 15"><circle cx="5" cy="6" r="4.300" fill="#f1e9ea" stroke="#a9a9a9" stroke-width="1.200"/><path d="M7 1l6.500 5-6.500 5z" fill="#aaa"/><path d="M5 10v4.500" stroke="#a9a9a9" stroke-width="1.200"/></svg>
<div class="a" style="left:342px;top:120px;width:24px;height:22px;background:#b7d6f1;border:1px solid #0b6bd8"></div>
<svg style="left:346px;top:124px" width="17" height="14" viewBox="0 0 17 14"><path d="M0 1.500h7" stroke="#222" stroke-width="3"/><path d="M0 7.500h6" stroke="#222" stroke-width="2.400"/><path d="M0 13h4.500" stroke="#222" stroke-width="1.800"/><path d="M11.500 1.500h5.500M9.500 7.500h7.500M7 13.500h10" stroke="#222" stroke-width="1"/><path d="M10.500 0l-5 14" stroke="#1a6fd4" stroke-width="1.300"/></svg>
<div class="a" style="left:369px;top:121px;width:1px;height:20px;background:#bdbdbd"></div>
<svg style="left:377px;top:124px" width="17" height="15" viewBox="0 0 17 15"><rect x="3.500" y="0.500" width="9" height="6" fill="#e4e4e4" stroke="#a9a9a9"/><rect x="0.500" y="3.500" width="10" height="6" fill="#ececec" stroke="#a9a9a9"/><rect x="2.500" y="6.500" width="9" height="6.500" fill="#f2f2f2" stroke="#a9a9a9"/><path d="M10.500 8.500l5.500 5.500M16 8.500l-5.500 5.500" stroke="#999" stroke-width="1.600"/></svg>
<svg style="left:401px;top:123px" width="17" height="16" viewBox="0 0 17 16"><rect x="0.600" y="0.600" width="11" height="8" fill="#f4f6f8" stroke="#3a3a3a" stroke-width="1.200"/><path d="M1 2.200h10" stroke="#cfd8e4" stroke-width="1.600"/><rect x="5.600" y="7.600" width="11" height="8" fill="#f4f6f8" stroke="#3a3a3a" stroke-width="1.200"/><path d="M6 9.200h10" stroke="#cfd8e4" stroke-width="1.600"/><path d="M13.500 5.500v-3.500M12 3.500l1.500-2.500 1.500 2.500M1.500 10v3.500h2M2.500 12l2 1.500-2 1.500" fill="none" stroke="#111" stroke-width="1.100"/></svg>
<svg style="left:422px;top:130px" width="5" height="4" viewBox="0 0 5 4"><path d="M0 0h5l-2.500 3.500z" fill="#333"/></svg>
<svg style="left:436px;top:127px" width="9" height="8" viewBox="0 0 9 8"><path d="M0 0.500h9" stroke="#333" stroke-width="1.200"/><path d="M0.500 3h8l-4 4z" fill="#333"/></svg>
<svg style="left:1210px;top:138px" width="13" height="20" viewBox="0 0 13 20"><path d="M0.700 0.700v15l3.500-3.300 2.500 6 2.300-1-2.500-5.800 4.600-.2z" fill="#fff" stroke="#222" stroke-width="1.100"/></svg>

<!-- properties palette -->
<style>.pl{position:absolute;left:11px;height:16px;line-height:16px;white-space:nowrap;color:#1c1c1c}.pv{position:absolute;left:103px;height:16px;line-height:16px;white-space:nowrap;color:#1c1c1c}.hd{position:absolute;left:0;width:220px;height:18px;background:#c4d1df}.xbtn{position:absolute}</style>
<div class="a" style="left:0;top:167px;width:224px;height:701px;background:#eef0f3"></div>
<div class="hd" style="top:167px"></div>
<span class="t" style="left:3px;top:169px;color:#111">属性</span>
<svg style="left:206px;top:173px" width="8" height="7" viewBox="0 0 8 7"><path d="M0.700 0.500l6.600 6M7.300 0.500l-6.600 6" stroke="#111" stroke-width="1.600"/></svg>
<div class="a" style="left:0;top:185px;width:220px;height:2px;background:#e9ecf0"></div>
<div class="a" style="left:0;top:187px;width:219px;height:2px;background:#7d8084"></div>
<div class="a" style="left:0;top:189px;width:218px;height:327px;background:#f3f4f5;border-left:1px solid #b9bcc0"></div>
<div class="a" style="left:4px;top:192px;width:66px;height:66px;background:#f3f4f5;border:1px solid #d9dadb"></div>
<svg style="left:20px;top:208px" width="34" height="34" viewBox="0 0 34 34"><path d="M4.400 14.500v11.500l11.600 4.700v-11z" fill="#fbfcfd" stroke="#3a3d42" stroke-width="1"/><path d="M16 30.700l12.800-6v-10l-11.500 5.300z" fill="#b4b8c0" stroke="#3a3d42" stroke-width="1"/><path d="M8.300 7.900l-5.200 6.500 1.300.6 11.600 4.700 1.300.3z" fill="#fdfdfe" stroke="#3a3d42" stroke-width="1" stroke-linejoin="round"/><path d="M8.300 7.500l12-5.300 10.700 10.500-12.900 6.200z" fill="#e2e5ec" stroke="#3a3d42" stroke-width="1.100" stroke-linejoin="round"/><path d="M8.300 7.500l-6.200 6 1.200 1.200 5-6.200 9.800 11.500 1-1.100z" fill="#4a4d52"/><path d="M8.300 19.100l3 1.300v8.100l-3-1.200z" fill="#3a3a3a"/><path d="M9.800 20.300v7.500" stroke="#6a6a6a" stroke-width=".8"/></svg>
<span class="t" style="left:74px;top:218px">三维视图</span>
<svg style="left:208px;top:224px" width="8" height="5" viewBox="0 0 8 5"><path d="M0 0h8l-4 4.500z" fill="#333"/></svg>
<div class="a" style="left:1px;top:262px;width:134px;height:24px;background:#e3e3e6;border:1px solid #b5b5b8"></div>
<span class="t" style="left:5px;top:267px">三维视图: 1</span>
<svg style="left:122px;top:272px" width="9" height="6" viewBox="0 0 9 6"><path d="M0.500 0.500l4 4 4-4" fill="none" stroke="#444" stroke-width="1.200"/></svg>
<svg style="left:141px;top:265px" width="17" height="16" viewBox="0 0 17 16"><g fill="#f7f8f9" stroke="#444" stroke-width="1"><path d="M1.500 0.500h4l1.500 1.500v3.500l-1.500 1.500h-4l-1-1.500v-3.500z"/><path d="M1.500 8.500h4l1.500 1.500v3.500l-1.500 1.500h-4l-1-1.500v-3.500z"/><path d="M9.500 0.500h4.500v5h-4.500l-1-1.500v-2z"/><rect x="9.500" y="6.500" width="6.500" height="9" rx="1"/></g><rect x="11" y="8" width="3.500" height="2.200" fill="#2d6fd0"/><path d="M11 12.500h3.500" stroke="#444"/></svg>
<span class="t" style="left:162px;top:265px">编辑类型</span>
<div class="a" style="left:1px;top:289px;width:200px;height:19px;background:#dfdee3"></div>
<span class="t" style="left:3px;top:290px;color:#111">图形</span>
<svg style="left:188px;top:292px" width="7" height="10" viewBox="0 0 7 10"><path d="M0.500 4l3-3 3 3M0.500 8.500l3-3 3 3" fill="none" stroke="#111" stroke-width="1.300"/></svg>
<div class="a" style="left:202px;top:289px;width:16px;height:203px;background:#f1f2f4"></div>
<div class="a" style="left:203px;top:305px;width:14px;height:51px;background:#cdcdcf"></div>
<svg style="left:205px;top:294px" width="9" height="6" viewBox="0 0 9 6"><path d="M0.700 5l3.800-3.800 3.800 3.800" fill="none" stroke="#444" stroke-width="1.600"/></svg>
<svg style="left:205px;top:481px" width="9" height="6" viewBox="0 0 9 6"><path d="M0.700 1l3.800 3.800 3.800-3.800" fill="none" stroke="#444" stroke-width="1.600"/></svg>
<span class="pl" style="top:309px;color:#1c1c1c">视图比例</span>
<div class="a" style="left:101px;top:308px;width:100px;height:19px;background:#fff;border:1px solid #111"></div><span class="pv" style="top:309px;left:108px">1 : 100</span>
<div class="a" style="left:1px;top:327px;width:200px;height:0;border-top:1px dotted #8a8a8a"></div>
<span class="pl" style="top:329px;color:#9a9a9a">比例值 1:</span>
<span class="pv" style="top:329px;color:#9a9a9a">100</span>
<div class="a" style="left:1px;top:347px;width:200px;height:0;border-top:1px dotted #8a8a8a"></div>
<span class="pl" style="top:349px;color:#1c1c1c">详细程度</span>
<span class="pv" style="top:349px;color:#1c1c1c">精细</span>
<div class="a" style="left:1px;top:367px;width:200px;height:0;border-top:1px dotted #8a8a8a"></div>
<span class="pl" style="top:369px;color:#1c1c1c">零件可见性</span>
<span class="pv" style="top:369px;color:#1c1c1c">显示原状态</span>
<div class="a" style="left:1px;top:387px;width:200px;height:0;border-top:1px dotted #8a8a8a"></div>
<span class="pl" style="top:389px;color:#1c1c1c">可见性/图形替换</span>
<div class="a" style="left:102px;top:389px;width:97px;height:17px;background:#dfe2ea;border:1px solid #c4c6ca;border-bottom:2px solid #adafb3;border-right-color:#b4b6ba;text-align:center;line-height:15px;color:#1c1c1c">编辑...</div>
<div class="a" style="left:1px;top:407px;width:200px;height:0;border-top:1px dotted #8a8a8a"></div>
<span class="pl" style="top:409px;color:#1c1c1c">图形显示选项</span>
<div class="a" style="left:102px;top:409px;width:97px;height:17px;background:#dfe2ea;border:1px solid #c4c6ca;border-bottom:2px solid #adafb3;border-right-color:#b4b6ba;text-align:center;line-height:15px;color:#1c1c1c">编辑...</div>
<div class="a" style="left:1px;top:427px;width:200px;height:0;border-top:1px dotted #8a8a8a"></div>
<span class="pl" style="top:429px;color:#1c1c1c">规程</span>
<span class="pv" style="top:429px;color:#1c1c1c">机械</span>
<div class="a" style="left:1px;top:447px;width:200px;height:0;border-top:1px dotted #8a8a8a"></div>
<span class="pl" style="top:449px;color:#1c1c1c">显示隐藏线</span>
<span class="pv" style="top:449px;color:#1c1c1c">按规程</span>
<div class="a" style="left:1px;top:467px;width:200px;height:0;border-top:1px dotted #8a8a8a"></div>
<span class="pl" style="top:469px;color:#1c1c1c">默认分析显示...</span>
<span class="pv" style="top:469px;color:#1c1c1c">无</span>
<div class="a" style="left:1px;top:487px;width:200px;height:0;border-top:1px dotted #8a8a8a"></div>
<div class="a" style="left:100px;top:308px;width:0;height:184px;border-left:1px dotted #8a8a8a"></div>
<div class="a" style="left:200px;top:308px;width:0;height:184px;border-left:1px dotted #9a9a9a"></div>
<div class="a" style="left:11px;top:488px;width:36px;height:4px;overflow:hidden"><span class="t" style="left:0;top:1px">子规程</span></div>
<div class="a" style="left:104px;top:488px;width:24px;height:4px;overflow:hidden"><span class="t" style="left:0;top:1px">暖通</span></div>
<div class="a" style="left:1px;top:492px;width:217px;height:24px;background:#f0f1f3"></div>
<span class="t" style="left:3px;top:495px;color:#1a6fd4;text-decoration:underline">属性帮助</span>
<div class="a" style="left:143px;top:494px;width:74px;height:19px;background:#dcdcde;border:1px solid #c6c6c8;text-align:center;line-height:17px;color:#a2a2a2">应用</div>

<!-- project browser -->
<div class="hd" style="top:521px"></div>
<span class="t" style="left:3px;top:523px;color:#111;word-spacing:2.500px">项目浏览器 - 项目1</span>
<svg style="left:206px;top:527px" width="8" height="7" viewBox="0 0 8 7"><path d="M0.700 0.500l6.600 6M7.300 0.500l-6.600 6" stroke="#111" stroke-width="1.600"/></svg>
<div class="a" style="left:0;top:539px;width:220px;height:2px;background:#e9ecf0"></div>
<div class="a" style="left:0;top:541px;width:219px;height:2px;background:#7d8084"></div>
<div class="a" style="left:0;top:543px;width:218px;height:323px;background:#f3f4f5;border-left:1px solid #b9bcc0"></div>
<div class="a" style="left:203px;top:543px;width:15px;height:307px;background:#eceef1"></div>
<div class="a" style="left:203px;top:561px;width:15px;height:29px;background:#cdcdcf"></div>
<svg style="left:207px;top:549px" width="9" height="6" viewBox="0 0 9 6"><path d="M0.700 5l3.800-3.800 3.800 3.800" fill="none" stroke="#444" stroke-width="1.600"/></svg>
<svg style="left:207px;top:840px" width="9" height="6" viewBox="0 0 9 6"><path d="M0.700 1l3.800 3.800 3.800-3.800" fill="none" stroke="#444" stroke-width="1.600"/></svg>
<div class="a" style="left:1px;top:850px;width:217px;height:16px;background:#f1f2f4"></div>
<div class="a" style="left:18px;top:850px;width:149px;height:15px;background:#d0d0d2"></div>
<svg style="left:6px;top:854px" width="6" height="9" viewBox="0 0 6 9"><path d="M5 0.700l-3.800 3.800 3.800 3.800" fill="none" stroke="#444" stroke-width="1.600"/></svg>
<svg style="left:192px;top:854px" width="6" height="9" viewBox="0 0 6 9"><path d="M1 0.700l3.800 3.800-3.800 3.800" fill="none" stroke="#444" stroke-width="1.600"/></svg>
<div class="a" style="left:9px;top:558px;width:0;height:291px;border-left:1px dotted #a6a6a6"></div>
<div class="a" style="left:29px;top:562px;width:0;height:26px;border-left:1px dotted #a6a6a6"></div>
<div class="a" style="left:49px;top:600px;width:0;height:8px;border-left:1px dotted #a6a6a6"></div>
<div class="a" style="left:69px;top:620px;width:0;height:8px;border-left:1px dotted #a6a6a6"></div>
<div class="a" style="left:69px;top:637px;width:0;height:131px;border-left:1px dotted #a6a6a6"></div>
<div class="a" style="left:89px;top:640px;width:0;height:32px;border-left:1px dotted #a6a6a6"></div>
<div class="a" style="left:89px;top:700px;width:0;height:32px;border-left:1px dotted #a6a6a6"></div>
<div class="a" style="left:40px;top:544px;width:66px;height:19px;background:#e2e2ea"></div>
<svg style="left:5px;top:549px" width="9" height="9" viewBox="0 0 9 9"><rect x="0.500" y="0.500" width="8" height="8" rx="1" fill="#fdfdfe" stroke="#a9afc0"/><path d="M2 4.500h5" stroke="#3c4a84" stroke-width="1"/></svg>
<div class="a" style="left:15px;top:553px;width:6px;height:0;border-top:1px dotted #a6a6a6"></div>
<svg style="left:22px;top:546px" width="15" height="15" viewBox="0 0 15 15"><path d="M0.500 4v-3.500h3.500M11 0.500h3.500v3.500M14.500 11v3.500h-3.500M4 14.500h-3.500v-3.500" fill="none" stroke="#333" stroke-width="1.100"/><path d="M4 5.500l1.500-1.500h5.500v5l-1.500 1.500h-5.500z" fill="#fff" stroke="#333" stroke-width="1.100"/></svg>
<span class="t" style="left:43px;top:545px">视图 (专业)</span>
<svg style="left:25px;top:569px" width="9" height="9" viewBox="0 0 9 9"><rect x="0.500" y="0.500" width="8" height="8" rx="1" fill="#fdfdfe" stroke="#a9afc0"/><path d="M2 4.500h5" stroke="#3c4a84" stroke-width="1"/><path d="M4.500 2v5" stroke="#3c4a84" stroke-width="1"/></svg>
<div class="a" style="left:35px;top:573px;width:9px;height:0;border-top:1px dotted #a6a6a6"></div>
<span class="t" style="left:47px;top:565px">卫浴</span>
<svg style="left:25px;top:589px" width="9" height="9" viewBox="0 0 9 9"><rect x="0.500" y="0.500" width="8" height="8" rx="1" fill="#fdfdfe" stroke="#a9afc0"/><path d="M2 4.500h5" stroke="#3c4a84" stroke-width="1"/></svg>
<div class="a" style="left:35px;top:593px;width:9px;height:0;border-top:1px dotted #a6a6a6"></div>
<span class="t" style="left:47px;top:585px">机械</span>
<svg style="left:45px;top:609px" width="9" height="9" viewBox="0 0 9 9"><rect x="0.500" y="0.500" width="8" height="8" rx="1" fill="#fdfdfe" stroke="#a9afc0"/><path d="M2 4.500h5" stroke="#3c4a84" stroke-width="1"/></svg>
<div class="a" style="left:55px;top:613px;width:9px;height:0;border-top:1px dotted #a6a6a6"></div>
<span class="t" style="left:67px;top:605px">暖通</span>
<svg style="left:65px;top:629px" width="9" height="9" viewBox="0 0 9 9"><rect x="0.500" y="0.500" width="8" height="8" rx="1" fill="#fdfdfe" stroke="#a9afc0"/><path d="M2 4.500h5" stroke="#3c4a84" stroke-width="1"/></svg>
<div class="a" style="left:75px;top:633px;width:9px;height:0;border-top:1px dotted #a6a6a6"></div>
<span class="t" style="left:87px;top:625px">楼层平面</span>
<div class="a" style="left:90px;top:653px;width:13px;height:0;border-top:1px dotted #a6a6a6"></div>
<span class="t" style="left:107px;top:645px;word-spacing:1.500px">1 - 机械</span>
<div class="a" style="left:90px;top:673px;width:13px;height:0;border-top:1px dotted #a6a6a6"></div>
<span class="t" style="left:107px;top:665px;word-spacing:1.500px">2 - 机械</span>
<svg style="left:65px;top:689px" width="9" height="9" viewBox="0 0 9 9"><rect x="0.500" y="0.500" width="8" height="8" rx="1" fill="#fdfdfe" stroke="#a9afc0"/><path d="M2 4.500h5" stroke="#3c4a84" stroke-width="1"/></svg>
<div class="a" style="left:75px;top:693px;width:9px;height:0;border-top:1px dotted #a6a6a6"></div>
<span class="t" style="left:87px;top:685px">天花板平面</span>
<div class="a" style="left:90px;top:713px;width:13px;height:0;border-top:1px dotted #a6a6a6"></div>
<span class="t" style="left:107px;top:705px;word-spacing:1.500px">1 - 天花板机械</span>
<div class="a" style="left:90px;top:733px;width:13px;height:0;border-top:1px dotted #a6a6a6"></div>
<span class="t" style="left:107px;top:725px;word-spacing:1.500px">2 - 天花板机械</span>
<svg style="left:65px;top:749px" width="9" height="9" viewBox="0 0 9 9"><rect x="0.500" y="0.500" width="8" height="8" rx="1" fill="#fdfdfe" stroke="#a9afc0"/><path d="M2 4.500h5" stroke="#3c4a84" stroke-width="1"/><path d="M4.500 2v5" stroke="#3c4a84" stroke-width="1"/></svg>
<div class="a" style="left:75px;top:753px;width:9px;height:0;border-top:1px dotted #a6a6a6"></div>
<span class="t" style="left:87px;top:745px">三维视图</span>
<svg style="left:65px;top:769px" width="9" height="9" viewBox="0 0 9 9"><rect x="0.500" y="0.500" width="8" height="8" rx="1" fill="#fdfdfe" stroke="#a9afc0"/><path d="M2 4.500h5" stroke="#3c4a84" stroke-width="1"/><path d="M4.500 2v5" stroke="#3c4a84" stroke-width="1"/></svg>
<div class="a" style="left:75px;top:773px;width:9px;height:0;border-top:1px dotted #a6a6a6"></div>
<span class="t" style="left:87px;top:765px">立面 (建筑立面)</span>
<div class="a" style="left:10px;top:793px;width:10px;height:0;border-top:1px dotted #a6a6a6"></div>
<div class="a" style="left:10px;top:813px;width:10px;height:0;border-top:1px dotted #a6a6a6"></div>
<div class="a" style="left:10px;top:833px;width:10px;height:0;border-top:1px dotted #a6a6a6"></div>
<svg style="left:21px;top:785px" width="16" height="16" viewBox="0 0 16 16"><rect x="0.700" y="0.700" width="14.600" height="14.600" rx="1.500" fill="#fff" stroke="#444" stroke-width="1.300"/><path d="M1 3h14" stroke="#777" stroke-width="2.500"/><rect x="3" y="6" width="3" height="3" fill="#555"/><circle cx="4.500" cy="12" r="1.600" fill="#666"/><path d="M7.500 6.500h3M11.500 6.500h2.500M7.500 9h6M7.500 12h3M11.500 12h2.500" stroke="#444" stroke-width="1.100"/></svg>
<span class="t" style="left:44px;top:785px">图例</span>
<svg style="left:21px;top:807px" width="16" height="12" viewBox="0 0 16 12"><rect x="0.700" y="0.700" width="14.600" height="10.600" rx="1" fill="#fff" stroke="#444" stroke-width="1.300"/><path d="M1 2.200h14" stroke="#444" stroke-width="2.400"/><path d="M1 6h14M1 8.700h14" stroke="#c9a0a0" stroke-width="1"/><path d="M5.500 3v8" stroke="#888" stroke-width="1"/></svg>
<span class="t" style="left:44px;top:805px">明细表/数量</span>
<svg style="left:21px;top:826px" width="16" height="14" viewBox="0 0 16 14"><path d="M0.700 0.700h10.500l4 3.800v8.800h-14.500z" fill="#fff" stroke="#444" stroke-width="1.300" stroke-linejoin="round"/><path d="M11 0.700v4h4" fill="none" stroke="#444" stroke-width="1"/><path d="M3 11v-6.500h7v6.500M3 8.500h3.500v2.500M13 8v3" fill="none" stroke="#777" stroke-width="1.100"/></svg>
<span class="t" style="left:44px;top:825px">图纸 (全部)</span>
<div class="a" style="left:21px;top:846px;width:60px;height:4px;overflow:hidden"><svg style="left:0;top:0" width="16" height="10" viewBox="0 0 16 10"><rect x="1" y="0.600" width="5.500" height="8" fill="#fff" stroke="#444" stroke-width="1.200"/><rect x="9" y="0.600" width="5.500" height="8" fill="#fff" stroke="#444" stroke-width="1.200"/></svg><span class="t" style="left:23px;top:-1px">族</span></div>

<!-- MDI window 1 -->
<div class="a" style="left:220px;top:167px;width:5px;height:701px;background:#f3f4f6"></div>
<div class="a" style="left:225px;top:168px;width:566px;height:698px;background:#4f5154;border:2px solid #4f5154;box-shadow:0 -1px 0 0 #96989b"></div>
<div class="a" style="left:227px;top:170px;width:562px;height:694px;background:#d8e3f0;border-radius:6px 6px 0 0"></div>
<div class="a" style="left:227px;top:170px;width:562px;height:30px;background:linear-gradient(#c6d4e5,#ccd9e9 35%,#d7e2f0 80%,#dbe5f2);border-radius:5px 5px 0 0;border-top:1px solid #eef3f9"></div>
<svg style="left:236px;top:180px" width="16" height="16" viewBox="0 0 16 16"><path d="M0 0h11.500l4.500 4.500v11.500h-16z" fill="#12388a"/><path d="M1 1h9.500v3.500h4.500v4.500h-14z" fill="#eef2f8"/><path d="M10.500 0.500l5 5v-1l-4-4z" fill="#2a56b0"/><text x="1.500" y="15.200" font-size="7.600" font-weight="bold" font-family="Liberation Sans,sans-serif" fill="#fff" textLength="13" lengthAdjust="spacingAndGlyphs">RVT</text></svg>
<span class="t" style="left:256px;top:181px;color:#a6a8ab;white-space:pre;word-spacing:2.5px">图纸: -  - 管道尺寸标记.rfa</span>
<div class="a" style="left:680px;top:179px;width:32px;height:18px;background:linear-gradient(#d3dfed,#c4d2e3);border:1px solid #a4b3c6;border-radius:3px"></div>
<svg style="left:690px;top:187px" width="12" height="5" viewBox="0 0 12 5"><rect x="0.600" y="0.600" width="10.500" height="3.600" rx="1" fill="#fff" stroke="#4a4d52" stroke-width="1.100"/></svg>
<div class="a" style="left:714px;top:179px;width:32px;height:18px;background:linear-gradient(#d3dfed,#c4d2e3);border:1px solid #a4b3c6;border-radius:3px"></div>
<svg style="left:724px;top:182px" width="12" height="10" viewBox="0 0 12 10"><rect x="0.600" y="0.600" width="10.500" height="8.500" rx="1" fill="#fff" stroke="#4a4d52" stroke-width="1.100"/><rect x="3.500" y="3.500" width="4.800" height="2.800" fill="#fff" stroke="#4a4d52" stroke-width="1"/></svg>
<div class="a" style="left:748px;top:179px;width:32px;height:18px;background:linear-gradient(#d3dfed,#c4d2e3);border:1px solid #a4b3c6;border-radius:3px"></div>
<svg style="left:758px;top:183px" width="12" height="10" viewBox="0 0 12 10"><path d="M1 0.600h3l2 2.500 2-2.500h3l-3.500 4.200 3.500 4.400h-3l-2-2.600-2 2.600h-3l3.500-4.400z" fill="#fff" stroke="#4a4d52" stroke-width="1"/></svg>
<div class="a" style="left:234px;top:200px;width:548px;height:657px;background:#f3f4f6;border:2px solid #76797d;border-right:1px solid #c9ced6;border-bottom:1px solid #e8ecf2"></div>
<div class="a" style="left:236px;top:202px;width:527px;height:636px;background:#000"></div>
<svg style="left:768px;top:208px" width="9" height="6" viewBox="0 0 9 6"><path d="M0.700 5l3.800-3.800 3.800 3.800" fill="none" stroke="#444" stroke-width="1.700"/></svg>
<svg style="left:768px;top:826px" width="9" height="6" viewBox="0 0 9 6"><path d="M0.700 1l3.800 3.800 3.800-3.800" fill="none" stroke="#444" stroke-width="1.700"/></svg>
<div class="a" style="left:765px;top:512px;width:15px;height:16px;background:#d0d0d2"></div>
<svg style="left:769px;top:845px" width="10" height="10" viewBox="0 0 10 10"><g fill="#c3c5c9"><rect x="6" y="0" width="2" height="2"/><rect x="3" y="3" width="2" height="2"/><rect x="6" y="3" width="2" height="2"/><rect x="0" y="6" width="2" height="2"/><rect x="3" y="6" width="2" height="2"/><rect x="6" y="6" width="2" height="2"/></g></svg>
<div class="a" style="left:729px;top:204px;width:32px;height:114px;background:#4b4b4b;border:1px solid #5c5c5c;border-radius:4px"></div>
<svg style="left:752px;top:206px" width="7" height="7" viewBox="0 0 7 7"><rect x="0" y="0" width="7" height="7" rx="1" fill="#3a3a3a"/><path d="M1.500 1.500l4 4M5.500 1.500l-4 4" stroke="#c4c4c4" stroke-width="1.100"/></svg>
<svg style="left:734px;top:225px" width="18" height="18" viewBox="0 0 18 18"><path d="M9 0.500h8v8a8.300 8.300 0 1 1-8-8z" fill="#b3b3b3"/><circle cx="8.500" cy="8.200" r="5" fill="#a4a4a4" stroke="#4b4b4b" stroke-width="1.300"/><path d="M5 13.500l2-2M12 13.500l-2-2" stroke="#4b4b4b" stroke-width="1.200"/></svg>
<span class="a" style="left:745px;top:237px;font:9px/12px 'Liberation Sans',sans-serif;color:#24509c">2D</span>
<svg style="left:742px;top:252px" width="5" height="3" viewBox="0 0 5 3"><path d="M0 0h5l-2.500 2.500z" fill="#5d5d5d"/></svg>
<div class="a" style="left:731px;top:260px;width:28px;height:1px;background:#5e5e5e"></div>
<svg style="left:738px;top:269px" width="16" height="15" viewBox="0 0 16 15"><rect x="0" y="0" width="10.500" height="10" fill="#6f8f55"/><path d="M0 0h10.500" stroke="#86a86a" stroke-width="1"/><circle cx="11" cy="10" r="2.800" fill="#b9b9b9" stroke="#6a6a6a" stroke-width=".8"/><path d="M13 12l2.500 2.500" stroke="#8a8a8a" stroke-width="1"/></svg>
<svg style="left:742px;top:290px" width="5" height="3" viewBox="0 0 5 3"><path d="M0 0h5l-2.500 2.500z" fill="#5a5a5a"/></svg>
<svg style="left:752px;top:307px" width="7" height="7" viewBox="0 0 7 7"><rect x="0" y="0" width="7" height="7" rx="1" fill="#3a3a3a"/><path d="M1.500 2h4" stroke="#e6e6e6" stroke-width="1"/><path d="M1.500 3.500h4l-2 2.500z" fill="#e6e6e6"/></svg>
<div class="a" style="left:444px;top:463px;width:146px;height:42px;color:#fff;font:200 36px/42px 'Liberation Sans','Noto Serif CJK SC',serif;text-align:center;white-space:nowrap">DN直径</div>
<div class="a" style="left:444px;top:504px;width:146px;height:42px;color:#fff;font:200 36px/42px 'Liberation Sans','Noto Serif CJK SC',serif;text-align:center;white-space:nowrap">端点偏移</div>
<svg style="left:237px;top:839px" width="17" height="13" viewBox="0 0 17 13"><path d="M0.300 5.600C1 3.600 2.600 3.600 3.100 5.500L4.200 8.200" fill="none" stroke="#1a1a1a" stroke-width="1.200" stroke-linecap="round"/><path d="M4.200 8L10 7.600 10.900 8.800 8.800 11.500 6.200 11.600 4.200 9.400z" fill="#d2e6f8" stroke="#1a1a1a" stroke-width="1.200" stroke-linejoin="round"/><path d="M10 7.600L12 6.400 15 5 15.600 7.300 13.800 9.400 12 9.400 10.900 8.800" fill="#e4effa" stroke="#1a1a1a" stroke-width="1.200" stroke-linejoin="round"/><path d="M15 5C14 2.500 11 0.400 9.500 1.200 8.500 1.800 8.300 2.600 8.400 3.200" fill="none" stroke="#1a1a1a" stroke-width="1.200" stroke-linecap="round"/></svg>
<svg style="left:262px;top:842px" width="8" height="10" viewBox="0 0 8 10"><path d="M2.500 6c-1.300-.8-2-1.800-2-3a3.200 3.200 0 0 1 6.400 0c0 1.200-.7 2.200-2 3z" fill="#f2f2f2" stroke="#a8a8a8"/><rect x="2.500" y="6.500" width="2.500" height="2.500" fill="#ddd" stroke="#a8a8a8" stroke-width=".8"/></svg>
<svg style="left:283px;top:843px" width="6" height="8" viewBox="0 0 6 8"><path d="M5.300 0.600l-4 3.400 4 3.400" fill="none" stroke="#444" stroke-width="1.700"/></svg>
<svg style="left:752px;top:843px" width="6" height="8" viewBox="0 0 6 8"><path d="M0.700 0.600l4 3.400-4 3.400" fill="none" stroke="#444" stroke-width="1.700"/></svg>
<div class="a" style="left:512px;top:839px;width:17px;height:15px;background:#d0d0d2"></div>

<!-- MDI window 2 -->
<div class="a" style="left:789px;top:168px;width:566px;height:698px;background:#4f5154;border:2px solid #4f5154;box-shadow:0 -1px 0 0 #96989b"></div>
<div class="a" style="left:791px;top:170px;width:562px;height:694px;background:#d8e3f0;border-radius:6px 6px 0 0"></div>
<div class="a" style="left:791px;top:170px;width:562px;height:30px;background:linear-gradient(#c6d4e5,#ccd9e9 35%,#d7e2f0 80%,#dbe5f2);border-radius:5px 5px 0 0;border-top:1px solid #eef3f9"></div>
<svg style="left:800px;top:180px" width="16" height="16" viewBox="0 0 16 16"><path d="M0 0h11.500l4.500 4.500v11.500h-16z" fill="#12388a"/><path d="M1 1h9.500v3.500h4.500v4.500h-14z" fill="#eef2f8"/><path d="M10.500 0.500l5 5v-1l-4-4z" fill="#2a56b0"/><text x="1.500" y="15.200" font-size="7.600" font-weight="bold" font-family="Liberation Sans,sans-serif" fill="#fff" textLength="13" lengthAdjust="spacingAndGlyphs">RVT</text></svg>
<span class="t" style="left:820px;top:181px;color:#a6a8ab;white-space:pre;word-spacing:1.8px">三维视图: 1 - 项目1</span>
<div class="a" style="left:1244px;top:179px;width:32px;height:18px;background:linear-gradient(#d3dfed,#c4d2e3);border:1px solid #a4b3c6;border-radius:3px"></div>
<svg style="left:1254px;top:187px" width="12" height="5" viewBox="0 0 12 5"><rect x="0.600" y="0.600" width="10.500" height="3.600" rx="1" fill="#fff" stroke="#4a4d52" stroke-width="1.100"/></svg>
<div class="a" style="left:1278px;top:179px;width:32px;height:18px;background:linear-gradient(#d3dfed,#c4d2e3);border:1px solid #a4b3c6;border-radius:3px"></div>
<svg style="left:1288px;top:182px" width="12" height="10" viewBox="0 0 12 10"><rect x="0.600" y="0.600" width="10.500" height="8.500" rx="1" fill="#fff" stroke="#4a4d52" stroke-width="1.100"/><rect x="3.500" y="3.500" width="4.800" height="2.800" fill="#fff" stroke="#4a4d52" stroke-width="1"/></svg>
<div class="a" style="left:1312px;top:179px;width:32px;height:18px;background:linear-gradient(#d3dfed,#c4d2e3);border:1px solid #a4b3c6;border-radius:3px"></div>
<svg style="left:1322px;top:183px" width="12" height="10" viewBox="0 0 12 10"><path d="M1 0.600h3l2 2.500 2-2.500h3l-3.500 4.200 3.500 4.400h-3l-2-2.600-2 2.600h-3l3.500-4.400z" fill="#fff" stroke="#4a4d52" stroke-width="1"/></svg>
<div class="a" style="left:798px;top:200px;width:548px;height:657px;background:#f3f4f6;border:2px solid #76797d;border-right:1px solid #c9ced6;border-bottom:1px solid #e8ecf2"></div>
<div class="a" style="left:800px;top:202px;width:527px;height:636px;background:#000"></div>
<svg style="left:1332px;top:208px" width="9" height="6" viewBox="0 0 9 6"><path d="M0.700 5l3.800-3.800 3.800 3.800" fill="none" stroke="#444" stroke-width="1.700"/></svg>
<svg style="left:1332px;top:826px" width="9" height="6" viewBox="0 0 9 6"><path d="M0.700 1l3.800 3.800 3.800-3.800" fill="none" stroke="#444" stroke-width="1.700"/></svg>
<div class="a" style="left:1329px;top:512px;width:15px;height:16px;background:#d0d0d2"></div>
<svg style="left:1333px;top:845px" width="10" height="10" viewBox="0 0 10 10"><g fill="#c3c5c9"><rect x="6" y="0" width="2" height="2"/><rect x="3" y="3" width="2" height="2"/><rect x="6" y="3" width="2" height="2"/><rect x="0" y="6" width="2" height="2"/><rect x="3" y="6" width="2" height="2"/><rect x="6" y="6" width="2" height="2"/></g></svg>
<svg style="left:800px;top:201px" width="527" height="637" viewBox="800 201 527 637">
<defs><linearGradient id="el" x1="0" y1="0" x2="1" y2="1"><stop offset="0" stop-color="#d6d6d6"/><stop offset="1" stop-color="#6c6c6c"/></linearGradient></defs>
<g fill="none" stroke-linecap="round">
<path d="M853 390L964 453.500" stroke="#ededed" stroke-width="8.600"/>
<path d="M1038.500 404.500L1250.500 526" stroke="#ededed" stroke-width="8.600"/>
</g>
<g fill="none" stroke-linecap="butt">
<path d="M971 464V549" stroke="#ededed" stroke-width="8.600"/>
<path d="M975 555L1090 621" stroke="#ededed" stroke-width="8.600"/>
<path d="M1102 621L1253 535.500" stroke="#ededed" stroke-width="8.600"/>
</g>
<g fill="none" stroke-linecap="round">
<path d="M853 390L964 453.500" stroke="#7e2f15" stroke-width="7"/>
<path d="M1038.500 404.500L1250.500 526" stroke="#7e2f15" stroke-width="7"/>
<path d="M853 390L964 453.500" stroke="#b9481f" stroke-width="3"/>
<path d="M1038.500 404.500L1250.500 526" stroke="#b9481f" stroke-width="3"/>
</g>
<g fill="none" stroke-linecap="butt">
<path d="M971 464V549" stroke="#7e2f15" stroke-width="7"/>
<path d="M975 555L1090 621" stroke="#7e2f15" stroke-width="7"/>
<path d="M1102 621L1253 535.500" stroke="#7e2f15" stroke-width="7"/>
<path d="M971 464V549" stroke="#b0431d" stroke-width="3"/>
<path d="M975 555L1090 621" stroke="#b9481f" stroke-width="3"/>
<path d="M1102 621L1253 535.500" stroke="#c24c21" stroke-width="3"/>
</g>
<path d="M962 451.500q12 2 13.500 14.500h-9q-1-6-8.500-8z" fill="url(#el)" stroke="#f2f2f2" stroke-width="1"/>
<path d="M966.500 548h9l2.500 4-4.500 7.500q-6.500-3-7-11.500z" fill="url(#el)" stroke="#f2f2f2" stroke-width="1"/>
<path d="M1088 620.500q8-5 16 0l1.500 3.500q-9.500 7-19 0z" fill="url(#el)" stroke="#f2f2f2" stroke-width="1"/>
<path d="M1250.500 524.500q7-1.500 9 4.500 0 6-5 9l-4.500-7.500z" fill="url(#el)" stroke="#f2f2f2" stroke-width="1"/>
</svg>
<svg style="left:1210px;top:236px" width="102" height="88" viewBox="1210 236 102 88">
<path d="M1260.500 257.500a46.500 30.500 0 1 0 0.010 0zM1260.500 267a37 21.500 0 1 1-0.010 0z" fill="#4c4c4c" fill-rule="evenodd"/>
<path d="M1260.500 241l26.500 12.500v28.500l-26.500 16.500-26-16.500v-28.500z" fill="#6c6c6c"/>
<path d="M1234.500 253.500l26 12.500 26.500-12.500" fill="none" stroke="#757575" stroke-width="1"/>
<path d="M1260.500 266v32" stroke="#747474" stroke-width="1"/>
<path d="M1234.500 253.500l26 12.500v32.500l-26-16.500z" fill="#676767"/>
<g font-family="'Liberation Sans','Noto Sans CJK SC',sans-serif" fill="#a9a9a9" font-size="10.500">
<text x="1219" y="312" transform="rotate(-18 1225 306)">南</text>
<text x="1289" y="310" transform="rotate(20 1295 306)">东</text>
<text x="1225" y="270" font-size="8" transform="rotate(-30 1229 267)" fill="#b5b5b5">西</text>
<text x="1285" y="269" font-size="8" transform="rotate(30 1289 267)" fill="#b5b5b5">北</text>
<text x="1240" y="284" font-size="10" fill="#5a5a5a" transform="skewY(27) translate(0 -632)">前</text>
</g>
</svg>
<div class="a" style="left:1293px;top:330px;width:32px;height:114px;background:#4b4b4b;border:1px solid #5c5c5c;border-radius:4px"></div>
<svg style="left:1316px;top:332px" width="7" height="7" viewBox="0 0 7 7"><rect x="0" y="0" width="7" height="7" rx="1" fill="#3a3a3a"/><path d="M1.500 1.500l4 4M5.500 1.500l-4 4" stroke="#c4c4c4" stroke-width="1.100"/></svg>
<svg style="left:1298px;top:351px" width="18" height="18" viewBox="0 0 18 18"><path d="M9 0.500h8v8a8.300 8.300 0 1 1-8-8z" fill="#b3b3b3"/><circle cx="8.500" cy="8.200" r="5" fill="#a4a4a4" stroke="#4b4b4b" stroke-width="1.300"/><path d="M5 13.500l2-2M12 13.500l-2-2" stroke="#4b4b4b" stroke-width="1.200"/></svg>
<svg style="left:1306px;top:378px" width="5" height="3" viewBox="0 0 5 3"><path d="M0 0h5l-2.500 2.500z" fill="#5d5d5d"/></svg>
<div class="a" style="left:1295px;top:386px;width:28px;height:1px;background:#5e5e5e"></div>
<svg style="left:1302px;top:395px" width="16" height="15" viewBox="0 0 16 15"><rect x="0" y="0" width="10.500" height="10" fill="#6f8f55"/><path d="M0 0h10.500" stroke="#86a86a" stroke-width="1"/><circle cx="11" cy="10" r="2.800" fill="#b9b9b9" stroke="#6a6a6a" stroke-width=".8"/><path d="M13 12l2.500 2.500" stroke="#8a8a8a" stroke-width="1"/></svg>
<svg style="left:1306px;top:416px" width="5" height="3" viewBox="0 0 5 3"><path d="M0 0h5l-2.500 2.500z" fill="#5a5a5a"/></svg>
<svg style="left:1316px;top:433px" width="7" height="7" viewBox="0 0 7 7"><rect x="0" y="0" width="7" height="7" rx="1" fill="#3a3a3a"/><path d="M1.500 2h4" stroke="#e6e6e6" stroke-width="1"/><path d="M1.500 3.500h4l-2 2.500z" fill="#e6e6e6"/></svg>
<span class="t" style="left:822px;top:838px;color:#111;word-spacing:4px;font-size:11px">1 : 100</span>
<svg style="left:878px;top:839px" width="17" height="13" viewBox="0 0 17 13"><rect x="0.600" y="0.600" width="15.800" height="11.800" rx="1" fill="#fff" stroke="#444" stroke-width="1.100"/><path d="M2 2.500h13M2 6.500h13M2 10.500h13" stroke="#777" stroke-width="2" stroke-dasharray="2 2"/><path d="M4 4.500h12M4 8.500h12" stroke="#777" stroke-width="2" stroke-dasharray="2 2"/></svg>
<svg style="left:901px;top:840px" width="16" height="13" viewBox="0 0 16 13"><path d="M0.700 4.500l3-3.800h11.500v7.500l-3 4h-11.500z" fill="#d4e6f6" stroke="#1a6fd4" stroke-width="1.300" stroke-linejoin="round"/><path d="M0.700 4.500h11.500v7.500M12.200 4.500l3-3.800" fill="none" stroke="#1a6fd4" stroke-width="1.100"/><path d="M2.500 7h8" stroke="#e03030" stroke-width="1.300"/><path d="M2.500 9.500h8" stroke="#2cae3e" stroke-width="1.300"/></svg>
<svg style="left:920px;top:838px" width="17" height="16" viewBox="0 0 17 16"><path d="M6.500 0v14M0 6.500h13.500M2 2l9.500 9.500M11.500 2l-9.500 9.500" stroke="#e8a020" stroke-width="1"/><circle cx="6.800" cy="6.800" r="4" fill="#ffe04a" stroke="#e8a020" stroke-width=".8"/><path d="M9 8.500l6 6M15 8.500l-6 6" stroke="#e0262a" stroke-width="2.200"/></svg>
<svg style="left:943px;top:839px" width="16" height="15" viewBox="0 0 16 15"><circle cx="6" cy="5.500" r="4.800" fill="#eaf2fb" stroke="#1a6fd4" stroke-width="1.300"/><path d="M1 12.500h8" stroke="#444" stroke-width="1.600"/><path d="M8 7.500l6 6M14 7.500l-6 6" stroke="#e0262a" stroke-width="2.200"/></svg>
<svg style="left:961px;top:839px" width="18" height="15" viewBox="0 0 18 15"><path d="M0.500 3l3 1.500c1 4 2.500 5.500 5 5.500h2c1.500 0 2.500-1 2.500-3v-3.500h-7.500M7 1.500h4" fill="#f4f4f4" stroke="#777" stroke-width="1"/><path d="M13.500 11c-1-.7-1.800-1.700-1.800-3a3 3 0 0 1 6 0c0 1.300-.8 2.300-1.800 3z" fill="#dcecfb" stroke="#1a6fd4" stroke-width="1.100"/><rect x="13.600" y="11.500" width="2.400" height="2.500" fill="#fff" stroke="#1a6fd4" stroke-width=".9"/></svg>
<svg style="left:984px;top:839px" width="17" height="15" viewBox="0 0 17 15"><path d="M9 0.500h4" stroke="#444"/><path d="M4 2.500h12M4 2.500v10.500M7 5.500h9M7 5.500v7.500" fill="none" stroke="#1a6fd4" stroke-width="1.400"/><path d="M0 8.500h4v3h-4z" fill="#444"/><path d="M8 5.500l7 7M15 5.500l-7 7" stroke="#e0262a" stroke-width="2.200"/></svg>
<svg style="left:1004px;top:839px" width="18" height="15" viewBox="0 0 18 15"><path d="M9 0.500h4" stroke="#444"/><path d="M4 2.500h9M4 2.500v10.500M7 5.500h4M7 5.500v7.500" fill="none" stroke="#1a6fd4" stroke-width="1.400"/><path d="M0 8.500h4v3h-4z" fill="#444"/><path d="M7 9h3" stroke="#e03030" stroke-width="1.200"/><path d="M13 10c-1-.7-1.800-1.700-1.800-3a3 3 0 0 1 6 0c0 1.300-.8 2.300-1.800 3z" fill="#dcecfb" stroke="#1a6fd4" stroke-width="1.100"/><rect x="13.100" y="10.500" width="2.400" height="2.500" fill="#fff" stroke="#1a6fd4" stroke-width=".9"/></svg>
<svg style="left:1025px;top:838px" width="17" height="16" viewBox="0 0 17 16"><path d="M1 7.500l5.500-5.500 5.500 3M2 7v7h3.500v-4.500M6.500 2c3-2 7-.5 8 3.500" fill="none" stroke="#444" stroke-width="1.200"/><path d="M3.500 9.500v4.500" stroke="#444" stroke-width="2"/><rect x="7.500" y="9.500" width="7.500" height="6" fill="#f3b81c" stroke="#8a5a00" stroke-width=".9"/><path d="M9 9.500v-2a2.200 2.200 0 0 1 4.500 0v2" fill="none" stroke="#8a5a00" stroke-width="1.100"/></svg>
<svg style="left:1045px;top:839px" width="17" height="13" viewBox="0 0 17 13"><path d="M0.300 5.600C1 3.600 2.600 3.600 3.100 5.500L4.200 8.200" fill="none" stroke="#1a1a1a" stroke-width="1.200" stroke-linecap="round"/><path d="M4.200 8L10 7.600 10.900 8.800 8.800 11.500 6.200 11.600 4.200 9.400z" fill="#d2e6f8" stroke="#1a1a1a" stroke-width="1.200" stroke-linejoin="round"/><path d="M10 7.600L12 6.400 15 5 15.600 7.300 13.800 9.400 12 9.400 10.900 8.800" fill="#e4effa" stroke="#1a1a1a" stroke-width="1.200" stroke-linejoin="round"/><path d="M15 5C14 2.500 11 0.400 9.500 1.200 8.500 1.800 8.300 2.600 8.400 3.200" fill="none" stroke="#1a1a1a" stroke-width="1.200" stroke-linecap="round"/></svg>
<svg style="left:1071px;top:841px" width="8" height="11" viewBox="0 0 8 11"><path d="M2.500 6.500c-1.300-.8-2-1.800-2-3.200a3.200 3.200 0 0 1 6.400 0c0 1.400-.7 2.400-2 3.200z" fill="#dcecfb" stroke="#1a6fd4" stroke-width="1.100"/><rect x="2.500" y="7" width="2.500" height="2.800" fill="#fff" stroke="#1a6fd4" stroke-width=".9"/></svg>
<svg style="left:1089px;top:840px" width="15" height="14" viewBox="0 0 15 14"><path d="M1 1.500h1.500l1-1 1 1h3l1-1 1 1h2.500v3M1 1.500v10.500h1.500l1 1 1-1h3.500" fill="none" stroke="#222" stroke-width="1.300"/><rect x="8.500" y="6.500" width="6" height="5.500" rx="1" fill="#fff" stroke="#222" stroke-width="1.200"/><circle cx="11.500" cy="9.300" r="1.300" fill="none" stroke="#222" stroke-width=".9"/></svg>
<svg style="left:1109px;top:839px" width="16" height="15" viewBox="0 0 16 15"><path d="M1 14v-8l5-4h7v5M1 6h7l5-4M8 6v8M4 6.500v7.500" fill="none" stroke="#444" stroke-width="1.100"/><path d="M2.500 8v6M5.500 8v6" stroke="#e03030" stroke-width="1.200"/><circle cx="12" cy="7.500" r="3.300" fill="#ffd44a" stroke="#f0a020" stroke-width=".8"/><rect x="10.800" y="11" width="2.400" height="2.500" fill="#fff" stroke="#888" stroke-width=".8"/></svg>
<svg style="left:1131px;top:840px" width="15" height="14" viewBox="0 0 15 14"><path d="M0.600 5l3-3h8v6.500l-3 3.500h-8zM0.600 5h8v7M8.600 5l3-3" fill="#e4e4e4" stroke="#555" stroke-width="1.100"/><path d="M3.500 2.500l1.500-2h8.500v6.500l-2 2" fill="none" stroke="#777" stroke-width="1"/></svg>
<svg style="left:1151px;top:836px" width="17" height="18" viewBox="0 0 17 18"><rect x="0" y="0" width="17" height="3" fill="#f3f4f6"/><path d="M1 0v17M15.500 0v8M2 2.500h13M4 0.500l-3 2 3 2M12.500 0.500l3 2-3 2" fill="none" stroke="#222" stroke-width="1"/><path d="M2 12.500h7" stroke="#555" stroke-dasharray="1.500 1.500"/><rect x="9.500" y="11.500" width="6.500" height="5.500" fill="#cfcfcf" stroke="#444" stroke-width="1"/><path d="M10.800 11.500v-2a2 2 0 0 1 4 0v2" fill="none" stroke="#444" stroke-width="1.100"/></svg>
<svg style="left:1176px;top:843px" width="6" height="8" viewBox="0 0 6 8"><path d="M5.300 0.600l-4 3.400 4 3.400" fill="none" stroke="#444" stroke-width="1.700"/></svg>
<svg style="left:1316px;top:843px" width="6" height="8" viewBox="0 0 6 8"><path d="M0.700 0.600l4 3.400-4 3.400" fill="none" stroke="#444" stroke-width="1.700"/></svg>
<div class="a" style="left:1240px;top:839px;width:17px;height:15px;background:#d0d0d2"></div>

<!-- status bar -->
<div class="a" style="left:0;top:866px;width:1355px;height:21px;background:linear-gradient(#ececec 0,#dcdcdc 20%,#d2d2d2 60%,#c8c8c8 100%)"></div>
<span class="t" style="left:1px;top:872px;color:#111">就绪</span>
<svg style="left:491px;top:872px" width="17" height="15" viewBox="0 0 17 15"><path d="M7 2l3-1.500 3.500 1v5l-3.500 2-3-1.500z" fill="#dff0d8" stroke="#3f8f2e" stroke-width="1.200"/><path d="M1 7l3-1.500 3.500 1.500v8h-6.500z" fill="#d6e8fa" stroke="#1a6fd4" stroke-width="1.300"/><path d="M4.500 8v7" stroke="#1a6fd4"/><path d="M10.500 15v-5.500c-1.500-.8-1.500-3 0-3.800v2.300h2.500v-2.300c1.500.8 1.500 3 0 3.800v5.500" fill="#fff" stroke="#1c3f94" stroke-width="1.100"/></svg>
<div class="a" style="left:515px;top:871px;width:204px;height:16px;background:#f5f6f6;border:1px solid #cfcfcf;border-bottom:0"></div>
<svg style="left:707px;top:880px" width="9" height="5" viewBox="0 0 9 5"><path d="M0.500 0.500l4 3.800 4-3.800" fill="none" stroke="#9a9a9a" stroke-width="1.100"/></svg>
<svg style="left:728px;top:872px" width="15" height="15" viewBox="0 0 15 15"><rect x="5.500" y="0.500" width="9" height="6" rx="1.500" fill="#e4e4e4" stroke="#9a9a9a"/><path d="M8 6.500l-1 2.500 3-2.500" fill="#e4e4e4" stroke="#9a9a9a"/><path d="M0 15c0-3 1.500-4.500 3.500-5l3-6 1.500 1-2 5.500c1.500 1 2 2.500 2 4.500z" fill="#9e9e9e"/></svg>
<span class="t" style="left:749px;top:872px;color:#111">:0</span>
<svg style="left:782px;top:872px" width="16" height="15" viewBox="0 0 16 15"><rect x="0.700" y="0.700" width="14.600" height="16" rx="1" fill="#fff" stroke="#222" stroke-width="1.300"/><path d="M1 3.500h14" stroke="#222" stroke-width="1.200"/><path d="M3 7h2.500M7 7h6.500M3 10.500h2.500M7 10.500h6.500M3 14h2.500M7 14h6.500" stroke="#222" stroke-width="1.500"/></svg>
<svg style="left:808px;top:872px" width="14" height="15" viewBox="0 0 14 15"><rect x="0" y="0" width="14" height="15" fill="#a2a2a2"/><path d="M1 5.500h6v8.500M4.500 11.500l2.500 3 2.500-3" fill="none" stroke="#dedede" stroke-width="1.400"/></svg>
<div class="a" style="left:831px;top:871px;width:155px;height:16px;background:#f5f6f6;border:1px solid #cfcfcf;border-bottom:0"></div>
<span class="t" style="left:834px;top:873px;color:#9a9a9a">主模型</span>
<svg style="left:974px;top:880px" width="9" height="5" viewBox="0 0 9 5"><path d="M0.500 0.500l4 3.800 4-3.800" fill="none" stroke="#9a9a9a" stroke-width="1.100"/></svg>
<svg style="left:1152px;top:873px" width="17" height="14" viewBox="0 0 17 14"><ellipse cx="4.500" cy="3.500" rx="3.800" ry="2.600" fill="none" stroke="#e0a800" stroke-width="1.800"/><ellipse cx="11.500" cy="3.500" rx="3.800" ry="2.600" fill="none" stroke="#e0a800" stroke-width="1.800"/><path d="M6.5 4v9.500l2.200-2 1.600 3.800 1.500-.7-1.600-3.700 3-.1z" fill="#fff" stroke="#222" stroke-width=".9"/></svg>
<svg style="left:1178px;top:872px" width="17" height="15" viewBox="0 0 17 15"><path d="M1 9l8-6v3M1 11.500h8M2.500 14h7" fill="none" stroke="#1a6fd4" stroke-width="1.200"/><path d="M9.500 0.500l5 5M14.500 0.500l-5 5" stroke="#e0262a" stroke-width="1.800"/><path d="M9.5 5.5v9.500l2.200-2 1.600 3.800 1.500-.7-1.600-3.700 3-.1z" fill="#fff" stroke="#222" stroke-width=".9"/></svg>
<svg style="left:1204px;top:872px" width="17" height="15" viewBox="0 0 17 15"><path d="M1.500 1h7v2h-1v3.500h1.500v2.500h-8v-2.500h1.500v-3.500h-1z" fill="#f5a623" stroke="#c0650a" stroke-width="1"/><path d="M3 4.500h4" stroke="#ffe1a0" stroke-width="1.200"/><path d="M5 9v6" stroke="#666" stroke-width="1.200"/><path d="M9.5 5.5v9.500l2.200-2 1.600 3.800 1.500-.7-1.600-3.700 3-.1z" fill="#fff" stroke="#222" stroke-width=".9"/></svg>
<svg style="left:1231px;top:872px" width="15" height="15" viewBox="0 0 15 15"><path d="M1 2.500l7-2v12.500l-7 2z" fill="#c9dff5" stroke="#1a6fd4" stroke-width="1.400" stroke-linejoin="round"/><path d="M8 5.5v9.500l2.200-2 1.600 3.800 1.500-.7-1.600-3.700 3-.1z" fill="#fff" stroke="#222" stroke-width=".9"/></svg>
<svg style="left:1256px;top:871px" width="17" height="16" viewBox="0 0 17 16"><path d="M5 1v9M0.500 5.500h9" stroke="#222" stroke-width="1.300"/><path d="M5 0l1.800 2h-3.600zM5 11l1.800-2h-3.600zM0 5.500l2-1.800v3.600zM10 5.500l-2-1.800v3.600z" fill="#222"/><path d="M9.5 6v9.500l2.200-2 1.600 3.800 1.500-.7-1.600-3.700 3-.1z" fill="#fff" stroke="#222" stroke-width=".9"/></svg>
<svg style="left:1278px;top:872px" width="18" height="15" viewBox="0 0 18 15"><path d="M0.600 0.600h16.500v1.500l-6.500 6.500v6.400h-3.500v-6.400l-6.500-6.500z" fill="#d9d9d9" stroke="#777" stroke-width="1.100" stroke-linejoin="round"/><path d="M1.500 2.500h14.500" stroke="#999"/></svg>
<span class="t" style="left:1297px;top:876px;color:#111">:0</span>

</body></html>
